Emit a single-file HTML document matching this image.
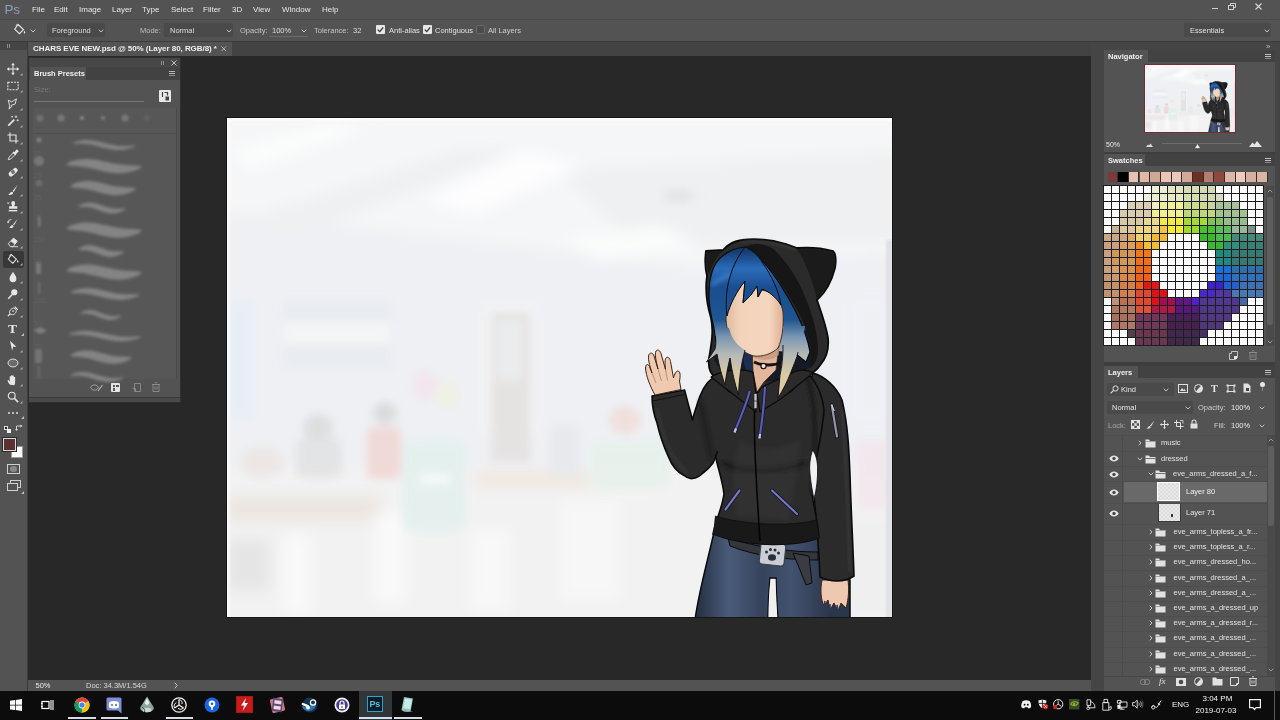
<!DOCTYPE html>
<html><head><meta charset="utf-8"><title>CHARS EVE NEW.psd</title>
<style>
html,body{margin:0;padding:0;background:#535353;}
#root{position:relative;width:1280px;height:720px;overflow:hidden;opacity:0.9999;font-family:"Liberation Sans",sans-serif;}
#root div{position:absolute;}
#root svg{position:absolute;overflow:visible;}
.t{position:absolute;white-space:nowrap;line-height:1;font-family:"Liberation Sans",sans-serif;}
</style></head><body><div id="root">
<div style="left:0px;top:0px;width:1280px;height:720px;background:#535353;"></div>
<div style="left:0px;top:0px;width:1280px;height:19px;background:#535353;"></div>
<div style="left:0px;top:19px;width:1280px;height:22px;background:#535353;border-top:1px solid #4a4a4a;box-sizing:border-box;"></div>
<div style="left:0px;top:41px;width:1280px;height:1px;background:#3a3a3a;"></div>
<div style="left:0px;top:42px;width:1280px;height:14px;background:#434343;"></div>
<div style="left:28px;top:42px;width:204px;height:14px;background:#535353;"></div>
<div style="left:28px;top:56px;width:1063px;height:624px;background:#282828;"></div>
<div style="left:0px;top:50px;width:27px;height:642px;background:#535353;"></div>
<div style="left:0px;top:42px;width:27px;height:8px;background:#454545;"></div>
<div style="left:27px;top:42px;width:1px;height:650px;background:#3c3c3c;"></div>
<div style="left:28px;top:680px;width:1063px;height:12px;background:#535353;"></div>
<div style="left:1091px;top:42px;width:189px;height:650px;background:#454545;"></div>
<span class="t" style="left:4.5px;top:2.5px;font-size:13.5px;color:#8d9ebf;letter-spacing:-0.300px;">Ps</span>
<span class="t" style="left:32px;top:5.5px;font-size:8px;color:#e6e6e6;">File</span>
<span class="t" style="left:54px;top:5.5px;font-size:8px;color:#e6e6e6;">Edit</span>
<span class="t" style="left:79px;top:5.5px;font-size:8px;color:#e6e6e6;">Image</span>
<span class="t" style="left:112px;top:5.5px;font-size:8px;color:#e6e6e6;">Layer</span>
<span class="t" style="left:142px;top:5.5px;font-size:8px;color:#e6e6e6;">Type</span>
<span class="t" style="left:171px;top:5.5px;font-size:8px;color:#e6e6e6;">Select</span>
<span class="t" style="left:203px;top:5.5px;font-size:8px;color:#e6e6e6;">Filter</span>
<span class="t" style="left:232px;top:5.5px;font-size:8px;color:#e6e6e6;">3D</span>
<span class="t" style="left:253px;top:5.5px;font-size:8px;color:#e6e6e6;">View</span>
<span class="t" style="left:282px;top:5.5px;font-size:8px;color:#e6e6e6;">Window</span>
<span class="t" style="left:322px;top:5.5px;font-size:8px;color:#e6e6e6;">Help</span>
<div style="left:1212px;top:8px;width:6px;height:1px;background:#cfcfcf;"></div>
<svg style="left:1228px;top:3px" width="10" height="9" viewBox="0 0 10 9"><rect x="0.5" y="2.5" width="5" height="4" fill="none" stroke="#cfcfcf"/><path d="M2.5 2.5v-2h5v4h-2" fill="none" stroke="#cfcfcf"/></svg>
<svg style="left:1255px;top:3px" width="8" height="8" viewBox="0 0 8 8"><path d="M0.5 0.5l6 6M6.5 0.5l-6 6" stroke="#d8d8d8" stroke-width="1.1"/></svg>
<svg style="left:13px;top:23px" width="14" height="13" viewBox="0 0 14 13"><path d="M5 1.5l5.5 5-4 4.2-4.8-4.6z" fill="none" stroke="#e4e4e4" stroke-width="1.1"/><path d="M3.5 3.5c-1-2.5 2-3 2.5-0.8" fill="none" stroke="#e4e4e4" stroke-width="0.9"/><path d="M11.3 7.6c0.9 1.4 1.4 2.2 0.6 2.8-0.9 0.5-1.6-0.6-0.6-2.8z" fill="#e4e4e4"/></svg>
<svg style="left:30px;top:29px" width="6" height="4" viewBox="0 0 6 4"><path d="M0.7 0.7l2.3 2.3 2.3-2.3" fill="none" stroke="#cfcfcf" stroke-width="0.9"/></svg>
<div style="left:47px;top:23px;width:58px;height:14px;background:#4a4a4a;border-radius:1px;"></div>
<span class="t" style="left:52px;top:26.7px;font-size:7.5px;color:#dedede;">Foreground</span>
<svg style="left:98px;top:29px" width="6" height="4" viewBox="0 0 6 4"><path d="M0.7 0.7l2.3 2.3 2.3-2.3" fill="none" stroke="#cfcfcf" stroke-width="0.9"/></svg>
<span class="t" style="left:140px;top:26.7px;font-size:7.5px;color:#bcbcbc;">Mode:</span>
<div style="left:164px;top:23px;width:69px;height:14px;background:#4a4a4a;border-radius:1px;"></div>
<span class="t" style="left:170px;top:26.7px;font-size:7.5px;color:#dedede;">Normal</span>
<svg style="left:226px;top:29px" width="6" height="4" viewBox="0 0 6 4"><path d="M0.7 0.7l2.3 2.3 2.3-2.3" fill="none" stroke="#cfcfcf" stroke-width="0.9"/></svg>
<span class="t" style="left:240px;top:26.7px;font-size:7.5px;color:#c4c4c4;">Opacity:</span>
<span class="t" style="left:272px;top:26.7px;font-size:7.5px;color:#dedede;">100%</span>
<div style="left:269px;top:36px;width:39px;height:1px;background:#6a6a6a;"></div>
<svg style="left:301px;top:29px" width="6" height="4" viewBox="0 0 6 4"><path d="M0.7 0.7l2.3 2.3 2.3-2.3" fill="none" stroke="#cfcfcf" stroke-width="0.9"/></svg>
<span class="t" style="left:314px;top:26.7px;font-size:7.5px;color:#c4c4c4;">Tolerance:</span>
<span class="t" style="left:353px;top:26.7px;font-size:7.5px;color:#dedede;">32</span>
<svg style="left:376px;top:25px" width="9" height="9" viewBox="0 0 9 9"><rect x="0" y="0" width="9" height="9" rx="1" fill="#e6e6e6"/><path d="M1.8 4.6l2 2 3.4-4.2" fill="none" stroke="#333" stroke-width="1.3"/></svg>
<span class="t" style="left:389px;top:26.7px;font-size:7.5px;color:#e0e0e0;">Anti-alias</span>
<svg style="left:423px;top:25px" width="9" height="9" viewBox="0 0 9 9"><rect x="0" y="0" width="9" height="9" rx="1" fill="#e6e6e6"/><path d="M1.8 4.6l2 2 3.4-4.2" fill="none" stroke="#333" stroke-width="1.3"/></svg>
<span class="t" style="left:435px;top:26.7px;font-size:7.5px;color:#e0e0e0;">Contiguous</span>
<svg style="left:476px;top:25px" width="9" height="9" viewBox="0 0 9 9"><rect x="0.5" y="0.5" width="8" height="8" rx="1" fill="#4b4b4b" stroke="#6a6a6a"/></svg>
<span class="t" style="left:488px;top:26.7px;font-size:7.5px;color:#cfcfcf;">All Layers</span>
<div style="left:1184px;top:23px;width:87px;height:14px;background:#4a4a4a;border-radius:1px;"></div>
<span class="t" style="left:1190px;top:26.7px;font-size:7.5px;color:#e0e0e0;">Essentials</span>
<svg style="left:1264px;top:29px" width="6" height="4" viewBox="0 0 6 4"><path d="M0.7 0.7l2.3 2.3 2.3-2.3" fill="none" stroke="#cfcfcf" stroke-width="0.9"/></svg>
<span class="t" style="left:33px;top:45px;font-size:8px;color:#f0f0f0;font-weight:bold;letter-spacing:-0.05px;">CHARS EVE NEW.psd @ 50% (Layer 80, RGB/8) *</span>
<svg style="left:221px;top:46px" width="6" height="6" viewBox="0 0 6 6"><path d="M0.5 0.5l4.5 4.5M5 0.5l-4.5 4.5" stroke="#bdbdbd" stroke-width="0.9"/></svg>
<div style="left:7px;top:44px;width:1px;height:4px;background:#8a8a8a;"></div>
<div style="left:9px;top:44px;width:1px;height:4px;background:#8a8a8a;"></div>
<div style="left:3px;top:251px;width:21px;height:17px;background:#383838;border-radius:2px;"></div>
<svg style="left:7px;top:63px" width="12" height="12" viewBox="0 0 14 14"><path d="M7 0.5v13M0.5 7h13" stroke="#e6e6e6" stroke-width="1.2"/><path d="M7 0l2.2 2.6h-4.4zM7 14l2.2-2.6h-4.4zM0 7l2.6-2.2v4.4zM14 7l-2.6-2.2v4.4z" fill="#e6e6e6"/></svg>
<svg style="left:20px;top:73px" width="2.500" height="2.500" viewBox="0 0 3 3"><path d="M3 0v3h-3z" fill="#b0b0b0"/></svg>
<svg style="left:7px;top:80px" width="12" height="12" viewBox="0 0 14 14"><rect x="1" y="2.5" width="12" height="9" fill="none" stroke="#e6e6e6" stroke-width="1.2" stroke-dasharray="2.4 1.2"/></svg>
<svg style="left:20px;top:90px" width="2.500" height="2.500" viewBox="0 0 3 3"><path d="M3 0v3h-3z" fill="#b0b0b0"/></svg>
<svg style="left:7px;top:97.5px" width="12" height="12" viewBox="0 0 14 14"><path d="M1.5 2.5l4 2 5.5-3.5-1.5 6-4.5 1.5 0 2-2.5 2.5 0.5-4z" fill="none" stroke="#e6e6e6" stroke-width="1.1" stroke-linejoin="round"/></svg>
<svg style="left:20px;top:107.5px" width="2.500" height="2.500" viewBox="0 0 3 3"><path d="M3 0v3h-3z" fill="#b0b0b0"/></svg>
<svg style="left:7px;top:115px" width="12" height="12" viewBox="0 0 14 14"><path d="M1.5 12.5l7-7" stroke="#e6e6e6" stroke-width="2"/><path d="M10.5 0.5v3M9 2h3M12.5 5v2.4M11.3 6.2h2.4M6 1v2M5 2h2" stroke="#e6e6e6" stroke-width="0.9"/></svg>
<svg style="left:20px;top:125px" width="2.500" height="2.500" viewBox="0 0 3 3"><path d="M3 0v3h-3z" fill="#b0b0b0"/></svg>
<svg style="left:7px;top:132px" width="12" height="12" viewBox="0 0 14 14"><path d="M3.5 0.5v10h10M0.5 3.5h10v10" fill="none" stroke="#e6e6e6" stroke-width="1.3"/></svg>
<svg style="left:20px;top:142px" width="2.500" height="2.500" viewBox="0 0 3 3"><path d="M3 0v3h-3z" fill="#b0b0b0"/></svg>
<svg style="left:7px;top:149px" width="12" height="12" viewBox="0 0 14 14"><path d="M1.5 12.5l1-3 5-5 2 2-5 5z" fill="none" stroke="#e6e6e6" stroke-width="1.1"/><path d="M7 3.5l3.5 3.5M8.5 5l3-3.5 1.2 1.2-3.2 3.3" stroke="#e6e6e6" stroke-width="1.6" fill="none"/></svg>
<svg style="left:20px;top:159px" width="2.500" height="2.500" viewBox="0 0 3 3"><path d="M3 0v3h-3z" fill="#b0b0b0"/></svg>
<svg style="left:7px;top:166px" width="12" height="12" viewBox="0 0 14 14"><rect x="1" y="4.5" width="12" height="5.5" rx="2.5" transform="rotate(-40 7 7)" fill="#e6e6e6"/><rect x="5.2" y="5.2" width="3.6" height="3.6" transform="rotate(-40 7 7)" fill="#535353"/><circle cx="7" cy="7" r="0.7" fill="#e6e6e6"/></svg>
<svg style="left:20px;top:176px" width="2.500" height="2.500" viewBox="0 0 3 3"><path d="M3 0v3h-3z" fill="#b0b0b0"/></svg>
<svg style="left:7px;top:184px" width="12" height="12" viewBox="0 0 14 14"><path d="M12.5 1l-6 7.2 1.4 1.2z" fill="#e6e6e6"/><path d="M6 9c-2 0-2.5 2-4.5 3.5 2.5 0.6 5.2 0 5.8-2.3z" fill="#e6e6e6"/></svg>
<svg style="left:20px;top:194px" width="2.500" height="2.500" viewBox="0 0 3 3"><path d="M3 0v3h-3z" fill="#b0b0b0"/></svg>
<svg style="left:7px;top:201px" width="12" height="12" viewBox="0 0 14 14"><path d="M5 2.2a2.2 2.2 0 1 1 4.400 0c0 1.6-0.900 2.300-0.900 3.800h3.500v3h-9.600v-3h3.500c0-1.500-0.900-2.200-0.900-3.800z" fill="#e6e6e6"/><rect x="2" y="10.5" width="10" height="1.6" fill="#e6e6e6"/><path d="M0.500 1.500l2 2M2.500 1.500l-2 2" stroke="#e6e6e6" stroke-width="0.8"/></svg>
<svg style="left:20px;top:211px" width="2.500" height="2.500" viewBox="0 0 3 3"><path d="M3 0v3h-3z" fill="#b0b0b0"/></svg>
<svg style="left:7px;top:218px" width="12" height="12" viewBox="0 0 14 14"><path d="M12.500 1l-5.500 6.500 1.300 1.100z" fill="#e6e6e6"/><path d="M6.500 8.300c-1.800 0-2.200 1.800-4 3.200 2.300 0.500 4.700 0 5.200-2z" fill="#e6e6e6"/><path d="M1 5.500a4 4 0 0 1 4-3.800" fill="none" stroke="#e6e6e6" stroke-width="1"/><path d="M0 4l1.200 2.200 1.800-1.700z" fill="#e6e6e6"/></svg>
<svg style="left:20px;top:228px" width="2.500" height="2.500" viewBox="0 0 3 3"><path d="M3 0v3h-3z" fill="#b0b0b0"/></svg>
<svg style="left:7px;top:236px" width="12" height="12" viewBox="0 0 14 14"><path d="M1.500 9l6-6.500 4.500 3.500-5 6.500h-3z" fill="none" stroke="#e6e6e6" stroke-width="1.100" stroke-linejoin="round"/><path d="M4.400 6l4.600 3.700 3-3.900-4.500-3.500z" fill="#e6e6e6"/><path d="M6 12.500h7" stroke="#e6e6e6" stroke-width="1"/></svg>
<svg style="left:20px;top:246px" width="2.500" height="2.500" viewBox="0 0 3 3"><path d="M3 0v3h-3z" fill="#b0b0b0"/></svg>
<svg style="left:7px;top:253px" width="12" height="12" viewBox="0 0 14 14"><path d="M5 2l6 5.200-4.300 4.800-5.200-5z" fill="none" stroke="#e6e6e6" stroke-width="1.200" stroke-linejoin="round"/><path d="M3.600 4.200c-1.200-2.800 2.200-3.600 2.700-1" fill="none" stroke="#e6e6e6" stroke-width="1"/><path d="M12.300 8c1 1.600 1.500 2.500 0.600 3.100-1 0.600-1.800-0.700-0.600-3.100z" fill="#e6e6e6"/></svg>
<svg style="left:20px;top:263px" width="2.500" height="2.500" viewBox="0 0 3 3"><path d="M3 0v3h-3z" fill="#b0b0b0"/></svg>
<svg style="left:7px;top:270.5px" width="12" height="12" viewBox="0 0 14 14"><path d="M7 1c1.500 3 4 5 4 8a4 4 0 0 1-8 0c0-3 2.500-5 4-8z" fill="#e6e6e6"/></svg>
<svg style="left:20px;top:280.5px" width="2.500" height="2.500" viewBox="0 0 3 3"><path d="M3 0v3h-3z" fill="#b0b0b0"/></svg>
<svg style="left:7px;top:288px" width="12" height="12" viewBox="0 0 14 14"><circle cx="8.500" cy="5" r="3.600" fill="#e6e6e6"/><path d="M6 7.600l-4.500 5" stroke="#e6e6e6" stroke-width="1.800"/></svg>
<svg style="left:20px;top:298px" width="2.500" height="2.500" viewBox="0 0 3 3"><path d="M3 0v3h-3z" fill="#b0b0b0"/></svg>
<svg style="left:7px;top:305px" width="12" height="12" viewBox="0 0 14 14"><path d="M3.500 10.500c-1.500-3.500 0.500-6 4.500-7l3 3c-1 4-3.500 6-7.500 4z" fill="none" stroke="#e6e6e6" stroke-width="1.100"/><circle cx="7" cy="7" r="1" fill="#e6e6e6"/><path d="M9 2l3.500 3.500M1 13l2.500-2.500" stroke="#e6e6e6" stroke-width="1.400"/></svg>
<svg style="left:20px;top:315px" width="2.500" height="2.500" viewBox="0 0 3 3"><path d="M3 0v3h-3z" fill="#b0b0b0"/></svg>
<svg style="left:7px;top:339.5px" width="12" height="12" viewBox="0 0 14 14"><path d="M3.500 1l7.500 7h-3.800l-1.200 4.500z" fill="#e6e6e6"/></svg>
<svg style="left:20px;top:349.5px" width="2.500" height="2.500" viewBox="0 0 3 3"><path d="M3 0v3h-3z" fill="#b0b0b0"/></svg>
<svg style="left:7px;top:356.5px" width="12" height="12" viewBox="0 0 14 14"><ellipse cx="7" cy="7" rx="5.800" ry="4.600" fill="#6b6b6b" stroke="#e6e6e6" stroke-width="1.100"/></svg>
<svg style="left:20px;top:366.5px" width="2.500" height="2.500" viewBox="0 0 3 3"><path d="M3 0v3h-3z" fill="#b0b0b0"/></svg>
<svg style="left:7px;top:374px" width="12" height="12" viewBox="0 0 14 14"><path d="M3.500 12.500c-1.500-1.500-2.500-3.300-3-5l1.300-0.500 1.400 2v-6.500h1.600v4.500v-5.500h1.600v5.500v-5h1.600v5.300v-3.800h1.500v6c0 2-0.600 2.500-1.200 3.500z" fill="#e6e6e6"/></svg>
<svg style="left:20px;top:384px" width="2.500" height="2.500" viewBox="0 0 3 3"><path d="M3 0v3h-3z" fill="#b0b0b0"/></svg>
<svg style="left:7px;top:391px" width="12" height="12" viewBox="0 0 14 14"><circle cx="5.500" cy="5.500" r="4" fill="none" stroke="#e6e6e6" stroke-width="1.300"/><path d="M8.500 8.500l4.500 4.500" stroke="#e6e6e6" stroke-width="1.800"/></svg>
<svg style="left:20px;top:401px" width="2.500" height="2.500" viewBox="0 0 3 3"><path d="M3 0v3h-3z" fill="#b0b0b0"/></svg>
<span class="t" style="left:8px;top:321.5px;font-size:13.5px;color:#e6e6e6;font-family:'Liberation Serif',serif;font-weight:bold;">T</span>
<svg style="left:21px;top:333px" width="3" height="3" viewBox="0 0 3 3"><path d="M3 0v3h-3z" fill="#bdbdbd"/></svg>
<div style="left:8px;top:412px;width:2px;height:2px;background:#dcdcdc;border-radius:1px;"></div>
<div style="left:12px;top:412px;width:2px;height:2px;background:#dcdcdc;border-radius:1px;"></div>
<div style="left:16px;top:412px;width:2px;height:2px;background:#dcdcdc;border-radius:1px;"></div>
<svg style="left:21px;top:416px" width="3" height="3" viewBox="0 0 3 3"><path d="M3 0v3h-3z" fill="#bdbdbd"/></svg>
<div style="left:4px;top:426px;width:4px;height:4px;background:#222;border:1px solid #ddd;box-sizing:border-box;"></div>
<div style="left:7px;top:429px;width:4px;height:4px;background:#eee;"></div>
<svg style="left:15px;top:424px" width="8" height="8" viewBox="0 0 8 8"><path d="M1.500 5.500v-3.500h4.500" fill="none" stroke="#ddd" stroke-width="0.900"/><path d="M0 5l1.500 2 1.500-2zM5.500 0.500l2 1.500-2 1.500z" fill="#ddd"/></svg>
<div style="left:11px;top:446px;width:12px;height:12px;background:#ffffff;border:1px solid #9a9a9a;box-sizing:border-box;"></div>
<div style="left:3px;top:438px;width:13px;height:13px;background:#5a3234;border:1px solid #d8d8d8;box-sizing:border-box;box-shadow:0 0 0 1px #2c2c2c;"></div>
<div style="left:7px;top:464px;width:13px;height:10px;background:transparent;border:1px solid #d0d0d0;box-sizing:border-box;"></div>
<div style="left:10px;top:466px;width:7px;height:6px;background:#8a8a8a;border-radius:3px;"></div>
<div style="left:10px;top:480px;width:11px;height:8px;background:transparent;border:1px solid #d0d0d0;box-sizing:border-box;"></div>
<div style="left:7px;top:483px;width:11px;height:8px;background:#535353;border:1px solid #d0d0d0;box-sizing:border-box;"></div>
<svg style="left:21px;top:491px" width="3" height="3" viewBox="0 0 3 3"><path d="M3 0v3h-3z" fill="#bdbdbd"/></svg>
<div style="left:226px;top:117px;width:667px;height:501px;background:#161616;"></div>
<svg style="left:0;top:0" width="1280" height="720" viewBox="0 0 1280 720">
<defs>
<clipPath id="imgclip"><rect x="227" y="118" width="665" height="499"/></clipPath>
<filter id="bl8" x="-30%" y="-30%" width="160%" height="160%"><feGaussianBlur stdDeviation="7"/></filter>
<filter id="bl4" x="-30%" y="-30%" width="160%" height="160%"><feGaussianBlur stdDeviation="4"/></filter>
<filter id="bl2" x="-30%" y="-30%" width="160%" height="160%"><feGaussianBlur stdDeviation="2"/></filter>
<filter id="bl1" x="-30%" y="-30%" width="160%" height="160%"><feGaussianBlur stdDeviation="1"/></filter>
<linearGradient id="hairg" gradientUnits="userSpaceOnUse" x1="0" y1="250" x2="0" y2="395">
<stop offset="0" stop-color="#143a70"/><stop offset="0.130" stop-color="#2a6cba"/><stop offset="0.260" stop-color="#1a4e90"/><stop offset="0.480" stop-color="#1f5590"/><stop offset="0.600" stop-color="#7c97b2"/><stop offset="0.720" stop-color="#b4b9b6"/><stop offset="0.850" stop-color="#d8c8a4"/><stop offset="1" stop-color="#e0cea6"/></linearGradient>
<linearGradient id="sking" gradientUnits="userSpaceOnUse" x1="726" y1="0" x2="784" y2="0">
<stop offset="0" stop-color="#e2b99e"/><stop offset="0.250" stop-color="#f3d3bb"/><stop offset="0.750" stop-color="#f4d5be"/><stop offset="1" stop-color="#dcae93"/></linearGradient>
<linearGradient id="jeang" gradientUnits="userSpaceOnUse" x1="700" y1="0" x2="830" y2="0">
<stop offset="0" stop-color="#2a3448"/><stop offset="0.220" stop-color="#4a5b7a"/><stop offset="0.480" stop-color="#36435c"/><stop offset="0.700" stop-color="#42526f"/><stop offset="1" stop-color="#2c364b"/></linearGradient>
</defs><g id="artwork"><g clip-path="url(#imgclip)"><rect x="227" y="118" width="665" height="499" fill="#f5f6f7"/><g filter="url(#bl8)"><path d="M200 208L700 268L920 250L920 470L200 470z" fill="#eef0f4"/><path d="M227 225L460 150L520 150L300 235z" fill="#eff0f2"/><path d="M560 170L920 150L920 240L640 250z" fill="#eff0f2"/><path d="M425 200L520 150L585 165L475 215z" fill="#fdfdfe"/><path d="M230 150L330 122L370 128L250 170z" fill="#fbfcfc"/><path d="M560 240L660 225L700 245L600 262z" fill="#fafbfb"/><rect x="200" y="465" width="720" height="170" fill="#f2f2f2"/><rect x="227" y="497" width="153" height="24" fill="#ebe5df"/><rect x="478" y="472" width="112" height="14" fill="#eee6da"/><rect x="227" y="540" width="42" height="50" fill="#e5e5e5"/><rect x="284" y="535" width="26" height="80" fill="#f9f9f9"/><rect x="374" y="512" width="32" height="90" fill="#f9f9f9"/><rect x="470" y="530" width="40" height="80" fill="#f8f8f8"/><rect x="560" y="500" width="60" height="100" fill="#f7f7f7"/></g><g filter="url(#bl4)" opacity="0.850"><rect x="486" y="306" width="50" height="128" fill="#f6f6f7"/><rect x="491" y="312" width="40" height="150" fill="#e4e1df"/><rect x="497" y="320" width="26" height="60" fill="#ebecee"/><rect x="282" y="300" width="110" height="70" fill="#e9ecf0"/><rect x="284" y="322" width="106" height="22" fill="#f5f6f7"/><rect x="227" y="300" width="26" height="120" fill="#e8eef8"/><ellipse cx="385" cy="413" rx="12" ry="11" fill="#d8d8d8"/><rect x="367" y="427" width="34" height="52" rx="8" fill="#f1d5d2"/><ellipse cx="318" cy="428" rx="15" ry="14" fill="#dcdcdc"/><rect x="296" y="438" width="46" height="40" rx="8" fill="#e2e2e3"/><ellipse cx="262" cy="462" rx="22" ry="16" fill="#ece6e3"/><rect x="402" y="440" width="64" height="92" rx="12" fill="#e3f0ee"/><rect x="420" y="474" width="30" height="10" fill="#f6fbfa"/><ellipse cx="425" cy="385" rx="12" ry="14" fill="#f4e3ec"/><ellipse cx="447" cy="395" rx="9" ry="14" fill="#eff2de"/><ellipse cx="625" cy="420" rx="16" ry="14" fill="#f1ddd9"/><rect x="590" y="440" width="80" height="50" rx="10" fill="#e7f1eb"/><rect x="550" y="425" width="30" height="50" rx="6" fill="#e6e8ec"/><rect x="852" y="300" width="40" height="120" fill="#eef1f5"/><rect x="856" y="440" width="36" height="70" fill="#f2e7ee"/><rect x="850" y="520" width="42" height="97" fill="#f0efef"/></g><ellipse cx="679" cy="196" rx="16" ry="8" fill="#e3e6e9" filter="url(#bl4)"/><rect x="886" y="240" width="8" height="380" fill="#dfe1e4" filter="url(#bl1)"/><path d="M228 620V119H893" stroke="#ffffff" stroke-width="2.500" fill="none" filter="url(#bl1)"/><path d="M714 532C708 560 699 590 695 620L768 620C768 605 769 590 770 578L776 578C776 592 777 606 778 620L850 620L850 580L822 572L818 536z" fill="url(#jeang)" stroke="#0b0b0b" stroke-width="1.500"/><path d="M768.500 620C768.500 605 769 592 770.500 579L775.500 579C776 592 776.500 606 777.500 620z" fill="#f1f0f0"/><path d="M728 538C760 548 790 552 818 552L818 560C790 560 758 557 730 546z" fill="#34363c" stroke="#0b0b0b" stroke-width="1"/><path d="M793 553L809 556L812 583L806 585L800 570z" fill="#3a3c43" stroke="#0b0b0b" stroke-width="1"/><rect x="760" y="543" width="25" height="22" rx="3" transform="rotate(6 772 554)" fill="#c9ced6" stroke="#3c4047" stroke-width="1.200"/><ellipse cx="772" cy="557.500" rx="4" ry="3.200" fill="#2c3038"/><circle cx="766.500" cy="552" r="1.500" fill="#2c3038"/><circle cx="770.500" cy="549.500" r="1.500" fill="#2c3038"/><circle cx="775" cy="550" r="1.500" fill="#2c3038"/><circle cx="778.500" cy="553" r="1.500" fill="#2c3038"/><path d="M822 580C820 590 821 600 824 606L828 600L830 610L834 603L838 611L841 603L846 608C849 598 849 588 848 580z" fill="#eec9b0" stroke="#3a2418" stroke-width="1"/><path d="M824 606l1-5M830 610l0-6M838 611l-1-6" stroke="#2c3a5c" stroke-width="1.600"/><path d="M813 373C824 376 836 386 842 400C848 425 849 450 850 475C851 510 853 545 854 576C844 583 830 582 820 577C819 548 816 520 814 495C806 470 800 440 800 410z" fill="#2b2b2b" stroke="#0b0b0b" stroke-width="1.600"/><path d="M842 410C846 450 848 520 850 572" stroke="#3d3d3d" stroke-width="3" fill="none" opacity="0.600" filter="url(#bl1)"/><path d="M722 380C712 395 708 415 711 434C713 455 722 475 724 494C722 508 716 520 713 534C745 546 790 548 819 538C818 522 814 508 812 494C812 470 822 440 824 410C822 392 815 380 806 372L770 372L752 374z" fill="#2b2b2b" stroke="#0b0b0b" stroke-width="1.600"/><path d="M715 516C745 525 790 527 816 520L819 538C790 548 745 546 713 534z" fill="#191919"/><path d="M715 516C745 525 790 527 816 520" stroke="#0c0c0c" stroke-width="1" fill="none" opacity="0.700"/><path d="M722 462C740 474 780 474 806 462" stroke="#141414" stroke-width="5" fill="none" opacity="0.700" filter="url(#bl2)"/><path d="M740 440C752 452 778 452 800 440C800 470 790 500 790 520L736 516C734 490 730 465 740 440z" fill="#3d3d3d" opacity="0.350" filter="url(#bl2)"/><path d="M806 376C815 395 818 440 812 494" stroke="#1b1b1b" stroke-width="5" fill="none" opacity="0.800" filter="url(#bl1)"/><path d="M812.500 450C810 458 809 466 810 474C811 484 812.500 492 814 499C816.500 490 818 478 817.500 466C817 458 815 453 812.500 450z" fill="#eef0f3" stroke="#0b0b0b" stroke-width="0.800"/><path d="M755 392C753 430 756 480 760 541" stroke="#050505" stroke-width="1.600" fill="none"/><path d="M718 375C710 378 704 386 700 396C697 405 694 413 692.500 420C690 410 687 400 684.600 390L652 396C652 406 654 415 657 423C660 436 664 447 668.500 457C672 466 677 472 684 475.500C687 478 690 479 692.500 478.500C697 478 700 476 703 473C707 470 710 467 713 463C716 455 720 445 720 435C722 420 724 400 728 385z" fill="#2b2b2b"/><path d="M718 375C710 378 704 386 700 396C697 405 694 413 692.500 420C690 410 687 400 684.600 390L652 396C652 406 654 415 657 423C660 436 664 447 668.500 457C672 466 677 472 684 475.500C687 478 690 479 692.500 478.500C697 478 700 476 703 473C707 470 710 467 713 463C715 459 716.500 455 717.500 451" fill="none" stroke="#0b0b0b" stroke-width="1.600" stroke-linejoin="round"/><path d="M657 408C662 435 670 458 688 474" stroke="#3d3d3d" stroke-width="4" fill="none" opacity="0.450" filter="url(#bl1)"/><path d="M652.500 401L684.500 394.500" stroke="#0b0b0b" stroke-width="0.800" fill="none"/><path d="M700 400C704 420 708 440 712 460" stroke="#151515" stroke-width="4" fill="none" opacity="0.600" filter="url(#bl2)"/><path d="M655 395C650 386 646 376 645.500 368C645.500 364 648 363.500 649.500 366.500L652 373C649.500 365 647.500 358 649 354.500C650.500 352 653 353 654 356L658 369C656 361 654.500 354 656 351C658 349 660 350.500 661 353.500L665.500 369.500C665 364 664.500 359 666.500 357.500C668.500 356.500 670 358.500 670.500 361.500L673.500 378C674.500 374 676 371 678 371C680.500 371.500 680.500 376 679.500 381L681 389.500z" fill="#efc9b0" stroke="#3a2418" stroke-width="1" stroke-linejoin="round"/><path d="M652 373l4 10M658 369l3.500 12M665.500 369.500l2 11" stroke="#a9705a" stroke-width="0.700" fill="none"/><path d="M706 251L723 250C728 244 734 241 742 240C755 238 772 240 786 244L797 248C808 247 822 248 833 251C836 254 836 262 835 268C832 280 826 292 817 300C821 312 826 325 828 338C829 348 826 358 821 364C817 370 812 374 806 376L790 392L730 392L716 378C710 374 708 366 709 358C711 346 714 332 711 318C707 305 705 290 707 276C705 268 705 258 706 251z" fill="#2b2b2b" stroke="#0b0b0b" stroke-width="1.800" stroke-linejoin="round"/><path d="M797 249C806 262 812 280 817 299C826 290 832 278 834 266C835 258 835 254 832 252C822 249 808 248 797 249z" fill="#1b1b1b"/><path d="M706 252C706 260 706 268 709 274C712 264 717 256 723 251z" fill="#1b1b1b"/><path d="M742 242C760 240 780 244 796 250" stroke="#3d3d3d" stroke-width="2.500" fill="none" opacity="0.600" filter="url(#bl1)"/><path d="M716 330L812 330L812 366L790 380L730 384L714 360z" fill="#141a26"/><path d="M712 272C716 258 728 249 745 247C752 249 758 254 762 260C774 274 786 292 796 312C803 326 808 340 810 352L806 362L796 354L783 352L745 350L716 350C716 340 715 334 714 328C710 312 706 292 712 272z" fill="url(#hairg)" stroke="#0b0b0b" stroke-width="1.200" stroke-linejoin="round"/><path d="M744 348C742 358 744 370 752 378L752 348z" fill="#1b2f52"/><path d="M712 285C722 275 742 271 758 275" stroke="#4a90e0" stroke-width="4" fill="none" opacity="0.600" filter="url(#bl2)"/><path d="M745 247C752 243 762 243 772 248C788 262 800 282 808 304C814 320 818 336 818 350C818 358 815 364 810 368L812 352C810 338 804 322 796 308C786 290 774 272 762 260C758 254 752 249 745 247z" fill="#161616"/><path d="M752 345L753 372L757 392L764 382L776 370L779 345z" fill="#e3b79c" stroke="#3a2418" stroke-width="0.800"/><path d="M753 357C760 361 772 361 779 355L779 348L753 348z" fill="#c4957b" opacity="0.750"/><path d="M745 280C738 290 728 304 726 317C726 326 728 334 732 340C738 348 746 354 754 356C762 357 772 354 778 348C782 340 784 326 783 312C782 304 776 296 770 292L762 290L758 297L757 286L750 296L743 303z" fill="url(#sking)" stroke="#3a2418" stroke-width="0.900" stroke-linejoin="round"/><path d="M745 247C738 256 730 270 727 290C726 300 726 310 727 316C730 304 737 291 745 281L743 303L751 295L757 286L758 297L762 289C768 291 776 297 781 305C779 292 772 276 762 262C758 255 752 250 745 247z" fill="url(#hairg)" stroke="#0b0b0b" stroke-width="1" stroke-linejoin="round"/><path d="M754 362C762 366 774 366 783 362" stroke="#1a1212" stroke-width="3" fill="none"/><circle cx="763.500" cy="366" r="2.600" fill="#f0e6e6" stroke="#1a1212" stroke-width="1.200"/><path d="M711 377C722 370 740 368 753 372L756 394L756 412L738 398z" fill="#2b2b2b" stroke="#0b0b0b" stroke-width="1.200" stroke-linejoin="round"/><path d="M813 373C806 368 796 370 790 374L762 387L757 394L760 412L782 398z" fill="#2b2b2b" stroke="#0b0b0b" stroke-width="1.200" stroke-linejoin="round"/><path d="M716 328C716 338 716 344 715 349L706.500 362L717 354C719 366 722 376 725 385C726 376 728 366 730 358C732 372 735 384 738.500 395C739 380 741 364 745 350C738 346 732 340 729 328z" fill="url(#hairg)"/><path d="M715.500 336C716 342 716 345 715 349L706.500 362L717 354C719 366 722 376 725 385C726 376 728 366 730 358C732 372 735 384 738.500 395C739 380 741 364 745 350" fill="none" stroke="#0b0b0b" stroke-width="0.900" stroke-linejoin="round"/><path d="M783 326C783 345 783 360 780 375L778 398C783 390 788 380 791 372C794 364 797 358 798 352C801 348 803 340 805 326z" fill="url(#hairg)"/><path d="M783 345C783 358 782 366 780 375L778 398C783 390 788 380 791 372C794 364 797 358 798 352" fill="none" stroke="#0b0b0b" stroke-width="0.900" stroke-linejoin="round"/><rect x="754" y="393.500" width="3" height="15" fill="#c4c8ce" stroke="#222" stroke-width="0.700"/><path d="M754 401h3" stroke="#333" stroke-width="0.800"/><path d="M749.700 391C746 405 740 419 734.500 432" stroke="#14142a" stroke-width="3.400" fill="none"/><path d="M749.700 391C746 405 740 419 734.500 432" stroke="#5a5cb6" stroke-width="2.200" fill="none"/><path d="M736 428.500L734.500 432.500" stroke="#c6c6e6" stroke-width="2.200"/><path d="M765 387C764 405 762 422 759.500 438" stroke="#14142a" stroke-width="3.400" fill="none"/><path d="M765 387C764 405 762 422 759.500 438" stroke="#5a5cb6" stroke-width="2.200" fill="none"/><path d="M760 434L759.500 438.500" stroke="#c6c6e6" stroke-width="2.200"/><path d="M739.500 490.500L725.500 509.500M772 490.500L797 514" stroke="#0c0c18" stroke-width="3.600" stroke-linecap="round"/><path d="M739.500 490.500L725.500 509.500M772 490.500L797 514" stroke="#7478c6" stroke-width="2.200" stroke-linecap="round"/><path d="M831.700 405L837 436.500" stroke="#0c0c10" stroke-width="3.600" stroke-linecap="round"/><path d="M831.700 405L837 436.500" stroke="#9298aa" stroke-width="2.200" stroke-linecap="round"/><path d="M831.700 405l2.500 6" stroke="#d0d4dc" stroke-width="1.200"/></g></g></svg>
<div style="left:28px;top:57px;width:153px;height:346px;background:#2f2f2f;"></div>
<div style="left:29px;top:58px;width:151px;height:9px;background:#474747;"></div>
<div style="left:161px;top:61px;width:1px;height:4px;background:#8c8c8c;"></div>
<div style="left:163px;top:61px;width:1px;height:4px;background:#8c8c8c;"></div>
<svg style="left:171px;top:60px" width="6" height="6" viewBox="0 0 6 6"><path d="M0.500 0.500l5 5M5.500 0.500l-5 5" stroke="#cfcfcf" stroke-width="0.900"/></svg>
<div style="left:29px;top:67px;width:151px;height:13px;background:#424242;"></div>
<div style="left:30px;top:67px;width:56px;height:13px;background:#535353;"></div>
<span class="t" style="left:34px;top:70px;font-size:7.5px;color:#f0f0f0;font-weight:bold;">Brush Presets</span>
<div style="left:169px;top:71px;width:6px;height:1px;background:#b5b5b5;"></div>
<div style="left:169px;top:73px;width:6px;height:1px;background:#b5b5b5;"></div>
<div style="left:169px;top:75px;width:6px;height:1px;background:#8a8a8a;"></div>
<div style="left:29px;top:80px;width:151px;height:318px;background:#535353;"></div>
<span class="t" style="left:34px;top:86px;font-size:7.5px;color:#777;">Size:</span>
<div style="left:34px;top:101px;width:110px;height:1px;background:#787878;"></div>
<div style="left:159px;top:90px;width:12px;height:12px;background:#e8e8e8;border-radius:1px;"></div>
<svg style="left:159px;top:90px" width="12" height="12" viewBox="0 0 12 12"><path d="M3.500 2v5M5.500 2.500h3v3" stroke="#444" stroke-width="1.200" fill="none"/><path d="M6.500 6.500h3.500v4h-3.500z" fill="#444"/></svg>
<div style="left:33px;top:108px;width:143px;height:271px;background:#575757;"></div>
<div style="left:33px;top:133px;width:143px;height:1px;background:#4e4e4e;"></div>
<div style="left:176px;top:108px;width:1px;height:271px;background:#4a4a4a;"></div>
<div style="left:29px;top:397px;width:151px;height:1px;background:#3a3a3a;"></div>
<div style="left:29px;top:398px;width:151px;height:4px;background:#4a4a4a;"></div>
<svg style="left:0;top:0" width="200" height="410" viewBox="0 0 200 410"><defs><filter id="bb" x="-20%" y="-50%" width="140%" height="200%"><feGaussianBlur stdDeviation="1.600"/></filter><filter id="bb2" x="-50%" y="-50%" width="200%" height="200%"><feGaussianBlur stdDeviation="1.100"/></filter></defs><g filter="url(#bb)" fill="none" stroke-linecap="round"><path d="M72.0 143.5L74.7 142.1L77.3 141.3L80.0 140.7L82.7 140.3L85.3 140.1L88.0 140.0L90.7 140.2L93.3 140.5L96.0 140.9L98.7 141.5L101.3 142.2L104.0 142.9L106.7 143.6L109.3 144.2L112.0 144.8L114.7 145.3L117.3 145.7L120.0 145.9L122.7 146.0L125.3 146.0L128.0 145.9L130.7 145.7L133.3 145.5L136.0 145.8L136.0 145.8L133.3 147.2L130.7 148.1L128.0 148.8L125.3 149.4L122.7 149.8L120.0 150.0L117.3 150.1L114.7 149.9L112.0 149.6L109.3 149.1L106.7 148.5L104.0 147.9L101.3 147.2L98.7 146.4L96.0 145.7L93.3 145.1L90.7 144.6L88.0 144.2L85.3 143.9L82.7 143.7L80.0 143.7L77.3 143.7L74.7 143.8L72.0 143.5z" fill="#8c8c8c" stroke="none" opacity="0.850"/><path d="M66.0 164.5L69.2 162.3L72.3 161.1L75.5 160.2L78.7 159.6L81.8 159.2L85.0 159.0L88.2 159.0L91.3 159.2L94.5 159.6L97.7 160.1L100.8 160.7L104.0 161.4L107.2 162.1L110.3 162.8L113.5 163.4L116.7 164.0L119.8 164.5L123.0 164.8L126.2 165.1L129.3 165.3L132.5 165.4L135.7 165.5L138.8 165.7L142.0 166.8L142.0 166.8L138.8 169.0L135.7 170.3L132.5 171.3L129.3 172.1L126.2 172.7L123.0 173.1L119.8 173.3L116.7 173.2L113.5 173.0L110.3 172.6L107.2 172.0L104.0 171.4L100.8 170.6L97.7 169.9L94.5 169.1L91.3 168.4L88.2 167.8L85.0 167.2L81.8 166.8L78.7 166.4L75.5 166.1L72.3 165.9L69.2 165.6L66.0 164.5z" fill="#8c8c8c" stroke="none" opacity="0.850"/><path d="M70.0 186.5L72.8 184.3L75.5 183.1L78.2 182.2L81.0 181.6L83.8 181.2L86.5 181.0L89.2 181.0L92.0 181.2L94.8 181.6L97.5 182.1L100.2 182.7L103.0 183.4L105.8 184.1L108.5 184.8L111.2 185.4L114.0 186.0L116.8 186.5L119.5 186.8L122.2 187.1L125.0 187.3L127.8 187.4L130.5 187.5L133.2 187.7L136.0 188.8L136.0 188.8L133.2 191.0L130.5 192.3L127.8 193.3L125.0 194.1L122.2 194.7L119.5 195.1L116.8 195.3L114.0 195.2L111.2 195.0L108.5 194.6L105.8 194.0L103.0 193.4L100.2 192.6L97.5 191.9L94.8 191.1L92.0 190.4L89.2 189.8L86.5 189.2L83.8 188.8L81.0 188.4L78.2 188.1L75.5 187.9L72.8 187.6L70.0 186.5z" fill="#8c8c8c" stroke="none" opacity="0.850"/><path d="M78.0 206.5L80.0 205.0L82.0 204.1L84.0 203.4L86.0 202.9L88.0 202.7L90.0 202.6L92.0 202.7L94.0 203.0L96.0 203.5L98.0 204.0L100.0 204.7L102.0 205.4L104.0 206.1L106.0 206.7L108.0 207.3L110.0 207.8L112.0 208.2L114.0 208.5L116.0 208.6L118.0 208.7L120.0 208.6L122.0 208.5L124.0 208.4L126.0 208.8L126.0 208.8L124.0 210.3L122.0 211.3L120.0 212.1L118.0 212.7L116.0 213.2L114.0 213.4L112.0 213.5L110.0 213.4L108.0 213.1L106.0 212.6L104.0 212.0L102.0 211.4L100.0 210.6L98.0 209.9L96.0 209.2L94.0 208.6L92.0 208.0L90.0 207.6L88.0 207.2L86.0 207.0L84.0 207.0L82.0 206.9L80.0 206.9L78.0 206.5z" fill="#8c8c8c" stroke="none" opacity="0.850"/><path d="M66.0 228.5L69.2 226.2L72.3 224.9L75.5 223.9L78.7 223.2L81.8 222.8L85.0 222.5L88.2 222.5L91.3 222.7L94.5 223.1L97.7 223.6L100.8 224.2L104.0 224.9L107.2 225.6L110.3 226.3L113.5 226.9L116.7 227.5L119.8 228.0L123.0 228.4L126.2 228.7L129.3 228.9L132.5 229.1L135.7 229.3L138.8 229.6L142.0 230.8L142.0 230.8L138.8 233.2L135.7 234.5L132.5 235.6L129.3 236.5L126.2 237.1L123.0 237.5L119.8 237.7L116.7 237.7L113.5 237.5L110.3 237.1L107.2 236.5L104.0 235.9L100.8 235.1L97.7 234.4L94.5 233.6L91.3 232.9L88.2 232.2L85.0 231.6L81.8 231.1L78.7 230.8L75.5 230.4L72.3 230.1L69.2 229.8L66.0 228.5z" fill="#8c8c8c" stroke="none" opacity="0.850"/><path d="M78.0 249.5L79.9 247.8L81.8 246.9L83.8 246.1L85.7 245.6L87.6 245.3L89.5 245.2L91.4 245.3L93.3 245.6L95.2 246.0L97.2 246.5L99.1 247.2L101.0 247.9L102.9 248.6L104.8 249.2L106.8 249.9L108.7 250.4L110.6 250.8L112.5 251.1L114.4 251.2L116.3 251.3L118.2 251.3L120.2 251.2L122.1 251.2L124.0 251.8L124.0 251.8L122.1 253.5L120.2 254.6L118.2 255.4L116.3 256.1L114.4 256.6L112.5 256.9L110.6 257.0L108.7 256.8L106.8 256.6L104.8 256.1L102.9 255.5L101.0 254.9L99.1 254.1L97.2 253.4L95.2 252.7L93.3 252.0L91.4 251.5L89.5 251.0L87.6 250.6L85.7 250.4L83.8 250.3L81.8 250.2L79.9 250.1L78.0 249.5z" fill="#8c8c8c" stroke="none" opacity="0.850"/><path d="M66.0 270.5L69.2 268.2L72.3 266.9L75.5 265.9L78.7 265.2L81.8 264.8L85.0 264.5L88.2 264.5L91.3 264.7L94.5 265.1L97.7 265.6L100.8 266.2L104.0 266.9L107.2 267.6L110.3 268.3L113.5 268.9L116.7 269.5L119.8 270.0L123.0 270.4L126.2 270.7L129.3 270.9L132.5 271.1L135.7 271.3L138.8 271.6L142.0 272.8L142.0 272.8L138.8 275.2L135.7 276.5L132.5 277.6L129.3 278.5L126.2 279.1L123.0 279.5L119.8 279.7L116.7 279.7L113.5 279.5L110.3 279.1L107.2 278.5L104.0 277.9L100.8 277.1L97.7 276.4L94.5 275.6L91.3 274.9L88.2 274.2L85.0 273.6L81.8 273.1L78.7 272.8L75.5 272.4L72.3 272.1L69.2 271.8L66.0 270.5z" fill="#8c8c8c" stroke="none" opacity="0.850"/><path d="M70.0 292.5L72.9 290.8L75.8 289.9L78.8 289.1L81.7 288.6L84.6 288.3L87.5 288.2L90.4 288.3L93.3 288.6L96.2 289.0L99.2 289.5L102.1 290.2L105.0 290.9L107.9 291.6L110.8 292.2L113.8 292.9L116.7 293.4L119.6 293.8L122.5 294.1L125.4 294.2L128.3 294.3L131.2 294.3L134.2 294.2L137.1 294.2L140.0 294.8L140.0 294.8L137.1 296.5L134.2 297.6L131.2 298.4L128.3 299.1L125.4 299.6L122.5 299.9L119.6 300.0L116.7 299.8L113.8 299.6L110.8 299.1L107.9 298.5L105.0 297.9L102.1 297.1L99.2 296.4L96.2 295.7L93.3 295.0L90.4 294.5L87.5 294.0L84.6 293.6L81.7 293.4L78.8 293.3L75.8 293.2L72.9 293.1L70.0 292.5z" fill="#8c8c8c" stroke="none" opacity="0.850"/><path d="M80.0 313.5L81.8 312.1L83.5 311.3L85.2 310.7L87.0 310.3L88.8 310.1L90.5 310.0L92.2 310.2L94.0 310.5L95.8 310.9L97.5 311.5L99.2 312.2L101.0 312.9L102.8 313.6L104.5 314.2L106.2 314.8L108.0 315.3L109.8 315.7L111.5 315.9L113.2 316.0L115.0 316.0L116.8 315.9L118.5 315.7L120.2 315.5L122.0 315.8L122.0 315.8L120.2 317.2L118.5 318.1L116.8 318.8L115.0 319.4L113.2 319.8L111.5 320.0L109.8 320.1L108.0 319.9L106.2 319.6L104.5 319.1L102.8 318.5L101.0 317.9L99.2 317.2L97.5 316.4L95.8 315.7L94.0 315.1L92.2 314.6L90.5 314.2L88.8 313.9L87.0 313.7L85.2 313.7L83.5 313.7L81.8 313.8L80.0 313.5z" fill="#8c8c8c" stroke="none" opacity="0.850"/><path d="M68.0 334.5L71.1 333.0L74.2 332.2L77.2 331.5L80.3 331.1L83.4 330.8L86.5 330.8L89.6 330.9L92.7 331.2L95.8 331.7L98.8 332.2L101.9 332.9L105.0 333.6L108.1 334.3L111.2 334.9L114.2 335.5L117.3 336.0L120.4 336.4L123.5 336.7L126.6 336.8L129.7 336.8L132.8 336.7L135.8 336.6L138.9 336.4L142.0 336.8L142.0 336.8L138.9 338.3L135.8 339.2L132.8 340.0L129.7 340.6L126.6 341.0L123.5 341.3L120.4 341.3L117.3 341.2L114.2 340.9L111.2 340.4L108.1 339.8L105.0 339.2L101.9 338.4L98.8 337.7L95.8 337.0L92.7 336.4L89.6 335.8L86.5 335.4L83.4 335.1L80.3 334.9L77.2 334.8L74.2 334.8L71.1 334.9L68.0 334.5z" fill="#8c8c8c" stroke="none" opacity="0.850"/><path d="M70.0 355.5L72.6 353.5L75.2 352.4L77.8 351.5L80.3 350.9L82.9 350.5L85.5 350.4L88.1 350.4L90.7 350.6L93.2 351.0L95.8 351.6L98.4 352.2L101.0 352.9L103.6 353.6L106.2 354.3L108.8 354.9L111.3 355.5L113.9 355.9L116.5 356.3L119.1 356.5L121.7 356.6L124.2 356.7L126.8 356.8L129.4 356.9L132.0 357.8L132.0 357.8L129.4 359.8L126.8 361.0L124.2 362.0L121.7 362.8L119.1 363.3L116.5 363.7L113.9 363.8L111.3 363.8L108.8 363.5L106.2 363.1L103.6 362.5L101.0 361.9L98.4 361.1L95.8 360.4L93.2 359.6L90.7 359.0L88.1 358.3L85.5 357.8L82.9 357.4L80.3 357.1L77.8 356.8L75.2 356.7L72.6 356.4L70.0 355.5z" fill="#8c8c8c" stroke="none" opacity="0.850"/><path d="M70.0 375.5L72.2 374.1L74.5 373.3L76.8 372.7L79.0 372.3L81.2 372.1L83.5 372.0L85.8 372.2L88.0 372.5L90.2 372.9L92.5 373.5L94.8 374.2L97.0 374.9L99.2 375.6L101.5 376.2L103.8 376.8L106.0 377.3L108.2 377.7L110.5 377.9L112.8 378.0L115.0 378.0L117.2 377.9L119.5 377.7L121.8 377.5L124.0 377.8L124.0 377.8L121.8 379.2L119.5 380.1L117.2 380.8L115.0 381.4L112.8 381.8L110.5 382.0L108.2 382.1L106.0 381.9L103.8 381.6L101.5 381.1L99.2 380.5L97.0 379.9L94.8 379.2L92.5 378.4L90.2 377.7L88.0 377.1L85.8 376.6L83.5 376.2L81.2 375.9L79.0 375.7L76.8 375.7L74.5 375.7L72.2 375.8L70.0 375.5z" fill="#8c8c8c" stroke="none" opacity="0.850"/></g><g filter="url(#bb2)"><circle cx="40" cy="118" r="3.5" fill="#707070"/><circle cx="61" cy="118" r="3.5" fill="#787878"/><circle cx="82" cy="118" r="2" fill="#8a8a8a"/><circle cx="103" cy="118" r="2" fill="#808080"/><circle cx="125" cy="118" r="3.5" fill="#787878"/><circle cx="147" cy="118" r="3" fill="#626262"/><circle cx="39" cy="140" r="2.5" fill="#808080"/><circle cx="39" cy="161" r="5" fill="#767676"/><circle cx="39" cy="183" r="3.5" fill="#6c6c6c"/><rect x="38" y="216" width="2.500" height="11" rx="1" fill="#7a7a7a"/><rect x="36" y="262" width="5" height="12" fill="#777"/><rect x="38.500" y="282" width="1.500" height="12" fill="#777"/><path d="M33 330l8-3 6 4-7 3z" fill="#7c7c7c"/><rect x="35" y="349" width="7" height="14" rx="2" fill="#737373"/><rect x="38" y="366" width="1.500" height="12" fill="#707070"/></g></svg>
<span class="t" style="left:34px;top:150px;font-size:7px;color:#626262;">15</span>
<span class="t" style="left:34px;top:172px;font-size:7px;color:#626262;">25</span>
<span class="t" style="left:34px;top:194px;font-size:7px;color:#626262;">35</span>
<span class="t" style="left:34px;top:236px;font-size:7px;color:#626262;">150</span>
<span class="t" style="left:34px;top:258px;font-size:7px;color:#626262;">71</span>
<span class="t" style="left:34px;top:297px;font-size:7px;color:#626262;">200</span>
<span class="t" style="left:34px;top:320px;font-size:7px;color:#626262;">50</span>
<span class="t" style="left:34px;top:343px;font-size:7px;color:#626262;">70</span>
<svg style="left:90px;top:383px" width="14" height="9" viewBox="0 0 14 9"><path d="M0.500 4.500c2-3.500 6-3.500 8 0-2 3.500-6 3.500-8 0z" fill="none" stroke="#b0b0b0" stroke-width="0.900"/><path d="M8 8l4.500-6" stroke="#b0b0b0" stroke-width="1.200"/></svg>
<div style="left:111px;top:383px;width:9px;height:9px;background:#e4e4e4;border-radius:1px;"></div>
<div style="left:112.5px;top:384.5px;width:2.5px;height:2.5px;background:#555;"></div>
<div style="left:116px;top:384.5px;width:2.5px;height:2.5px;background:#555;"></div>
<div style="left:112.5px;top:388px;width:2.5px;height:2.5px;background:#555;"></div>
<svg style="left:132px;top:383px" width="9" height="9" viewBox="0 0 9 9"><path d="M2.500 0.500h6v8h-6zM0.500 5.500h3v3" fill="none" stroke="#8d8d8d" stroke-width="0.900"/></svg>
<svg style="left:152px;top:382px" width="8" height="10" viewBox="0 0 8 10"><path d="M1 2.500h6v7h-6zM0 2.500h8M3 0.800h2M3 4.500v3M5 4.500v3" fill="none" stroke="#8d8d8d" stroke-width="0.900"/></svg>
<span class="t" style="left:1266px;top:43px;font-size:8px;color:#bdbdbd;">»</span>
<div style="left:1104px;top:50px;width:171px;height:12px;background:#424242;"></div>
<div style="left:1104px;top:50px;width:44px;height:12px;background:#535353;"></div>
<span class="t" style="left:1108px;top:52.5px;font-size:7.5px;color:#f0f0f0;font-weight:bold;">Navigator</span>
<div style="left:1265px;top:54px;width:6px;height:1px;background:#c0c0c0;"></div>
<div style="left:1265px;top:56px;width:6px;height:1px;background:#c0c0c0;"></div>
<div style="left:1265px;top:58px;width:6px;height:1px;background:#8c8c8c;"></div>
<div style="left:1104px;top:62px;width:171px;height:90px;background:#535353;"></div>
<div style="left:1144px;top:64px;width:92px;height:69px;background:#7a2a35;"></div>
<svg style="left:1145px;top:65px;overflow:hidden" width="90" height="67" viewBox="227 118 665 499" preserveAspectRatio="none"><use href="#artwork"/></svg>
<span class="t" style="left:1106px;top:141px;font-size:7px;color:#e8e8e8;">50%</span>
<svg style="left:1146px;top:143px" width="7" height="4" viewBox="0 0 7 4"><path d="M0 4l2-2.500 1 1 1.500-2 2.500 3.500z" fill="#dcdcdc"/></svg>
<div style="left:1162px;top:143px;width:80px;height:1px;background:#6c6c6c;"></div>
<svg style="left:1194px;top:143px" width="7" height="6" viewBox="0 0 7 6"><path d="M3.500 0.500l3 5h-6z" fill="#f0f0f0" stroke="#333" stroke-width="0.500"/></svg>
<svg style="left:1249px;top:141px" width="13" height="6" viewBox="0 0 13 6"><path d="M0 6l3.500-4.500 2 2 2.500-3.500 5 6z" fill="#e6e6e6"/></svg>
<div style="left:1104px;top:152px;width:171px;height:2px;background:#3e3e3e;"></div>
<div style="left:1104px;top:154px;width:171px;height:12px;background:#424242;"></div>
<div style="left:1104px;top:154px;width:41px;height:12px;background:#535353;"></div>
<span class="t" style="left:1108px;top:156.5px;font-size:7.5px;color:#f0f0f0;font-weight:bold;">Swatches</span>
<div style="left:1265px;top:158px;width:6px;height:1px;background:#c0c0c0;"></div>
<div style="left:1265px;top:160px;width:6px;height:1px;background:#c0c0c0;"></div>
<div style="left:1265px;top:162px;width:6px;height:1px;background:#8c8c8c;"></div>
<div style="left:1104px;top:166px;width:171px;height:196px;background:#535353;"></div>
<div style="left:1107.5px;top:172px;width:10.67px;height:10px;background:#7a3a3a;border-right:1px solid #3a2a28;box-sizing:border-box;"></div>
<div style="left:1118.17px;top:172px;width:10.67px;height:10px;background:#000000;border-right:1px solid #3a2a28;box-sizing:border-box;"></div>
<div style="left:1128.84px;top:172px;width:10.67px;height:10px;background:#e5c2b4;border-right:1px solid #3a2a28;box-sizing:border-box;"></div>
<div style="left:1139.51px;top:172px;width:10.67px;height:10px;background:#dfb8a6;border-right:1px solid #3a2a28;box-sizing:border-box;"></div>
<div style="left:1150.18px;top:172px;width:10.67px;height:10px;background:#d1a896;border-right:1px solid #3a2a28;box-sizing:border-box;"></div>
<div style="left:1160.85px;top:172px;width:10.67px;height:10px;background:#e9c6b6;border-right:1px solid #3a2a28;box-sizing:border-box;"></div>
<div style="left:1171.52px;top:172px;width:10.67px;height:10px;background:#ebc9ba;border-right:1px solid #3a2a28;box-sizing:border-box;"></div>
<div style="left:1182.19px;top:172px;width:10.67px;height:10px;background:#d2a999;border-right:1px solid #3a2a28;box-sizing:border-box;"></div>
<div style="left:1192.86px;top:172px;width:10.67px;height:10px;background:#6a3024;border-right:1px solid #3a2a28;box-sizing:border-box;"></div>
<div style="left:1203.53px;top:172px;width:10.67px;height:10px;background:#b07f72;border-right:1px solid #3a2a28;box-sizing:border-box;"></div>
<div style="left:1214.2px;top:172px;width:10.67px;height:10px;background:#8d4a3c;border-right:1px solid #3a2a28;box-sizing:border-box;"></div>
<div style="left:1224.87px;top:172px;width:10.67px;height:10px;background:#dcb7a8;border-right:1px solid #3a2a28;box-sizing:border-box;"></div>
<div style="left:1235.54px;top:172px;width:10.67px;height:10px;background:#ecccbc;border-right:1px solid #3a2a28;box-sizing:border-box;"></div>
<div style="left:1246.21px;top:172px;width:10.67px;height:10px;background:#d8b09e;border-right:1px solid #3a2a28;box-sizing:border-box;"></div>
<div style="left:1256.88px;top:172px;width:10.67px;height:10px;background:#d9b5a6;border-right:1px solid #3a2a28;box-sizing:border-box;"></div>
<svg style="left:1104px;top:186px" width="160" height="160" viewBox="0 0 160 160"><rect x="-1" y="-1" width="161" height="161" fill="#1e1e1e"/><rect x="0" y="0" width="7" height="7" fill="#ffffff"/><rect x="8" y="0" width="7" height="7" fill="#ffffff"/><rect x="16" y="0" width="7" height="7" fill="#ffffff"/><rect x="24" y="0" width="7" height="7" fill="#ffffff"/><rect x="32" y="0" width="7" height="7" fill="#ffffff"/><rect x="40" y="0" width="7" height="7" fill="#ffffff"/><rect x="48" y="0" width="7" height="7" fill="#ecedd6"/><rect x="56" y="0" width="7" height="7" fill="#ecedd6"/><rect x="64" y="0" width="7" height="7" fill="#e3e6c6"/><rect x="72" y="0" width="7" height="7" fill="#e3e6c6"/><rect x="80" y="0" width="7" height="7" fill="#d6dcb6"/><rect x="88" y="0" width="7" height="7" fill="#d6dcb6"/><rect x="96" y="0" width="7" height="7" fill="#d2dab4"/><rect x="104" y="0" width="7" height="7" fill="#d2dab4"/><rect x="112" y="0" width="7" height="7" fill="#ffffff"/><rect x="120" y="0" width="7" height="7" fill="#ffffff"/><rect x="128" y="0" width="7" height="7" fill="#ffffff"/><rect x="136" y="0" width="7" height="7" fill="#ffffff"/><rect x="144" y="0" width="7" height="7" fill="#ffffff"/><rect x="152" y="0" width="7" height="7" fill="#ffffff"/><rect x="0" y="8" width="7" height="7" fill="#ffffff"/><rect x="8" y="8" width="7" height="7" fill="#ffffff"/><rect x="16" y="8" width="7" height="7" fill="#ffffff"/><rect x="24" y="8" width="7" height="7" fill="#ffffff"/><rect x="32" y="8" width="7" height="7" fill="#ffffff"/><rect x="40" y="8" width="7" height="7" fill="#f0efe0"/><rect x="48" y="8" width="7" height="7" fill="#ecedd0"/><rect x="56" y="8" width="7" height="7" fill="#ecedd0"/><rect x="64" y="8" width="7" height="7" fill="#e4e8c4"/><rect x="72" y="8" width="7" height="7" fill="#e4e8c4"/><rect x="80" y="8" width="7" height="7" fill="#d4dcb4"/><rect x="88" y="8" width="7" height="7" fill="#d4dcb4"/><rect x="96" y="8" width="7" height="7" fill="#d0d9b6"/><rect x="104" y="8" width="7" height="7" fill="#d0d9b6"/><rect x="112" y="8" width="7" height="7" fill="#d3dbc0"/><rect x="120" y="8" width="7" height="7" fill="#ffffff"/><rect x="128" y="8" width="7" height="7" fill="#ffffff"/><rect x="136" y="8" width="7" height="7" fill="#ffffff"/><rect x="144" y="8" width="7" height="7" fill="#ffffff"/><rect x="152" y="8" width="7" height="7" fill="#ffffff"/><rect x="0" y="16" width="7" height="7" fill="#ffffff"/><rect x="8" y="16" width="7" height="7" fill="#ffffff"/><rect x="16" y="16" width="7" height="7" fill="#ffffff"/><rect x="24" y="16" width="7" height="7" fill="#d9cdb4"/><rect x="32" y="16" width="7" height="7" fill="#d9cdb4"/><rect x="40" y="16" width="7" height="7" fill="#d9cdb4"/><rect x="48" y="16" width="7" height="7" fill="#efecc4"/><rect x="56" y="16" width="7" height="7" fill="#f0ee98"/><rect x="64" y="16" width="7" height="7" fill="#f0ee98"/><rect x="72" y="16" width="7" height="7" fill="#f0ee98"/><rect x="80" y="16" width="7" height="7" fill="#cbda8c"/><rect x="88" y="16" width="7" height="7" fill="#cbda8c"/><rect x="96" y="16" width="7" height="7" fill="#cbda8c"/><rect x="104" y="16" width="7" height="7" fill="#c5d4a2"/><rect x="112" y="16" width="7" height="7" fill="#a9c09a"/><rect x="120" y="16" width="7" height="7" fill="#a9c09a"/><rect x="128" y="16" width="7" height="7" fill="#a9c09a"/><rect x="136" y="16" width="7" height="7" fill="#ffffff"/><rect x="144" y="16" width="7" height="7" fill="#ffffff"/><rect x="152" y="16" width="7" height="7" fill="#ffffff"/><rect x="0" y="24" width="7" height="7" fill="#ffffff"/><rect x="8" y="24" width="7" height="7" fill="#ffffff"/><rect x="16" y="24" width="7" height="7" fill="#d8cbb0"/><rect x="24" y="24" width="7" height="7" fill="#d8cbb0"/><rect x="32" y="24" width="7" height="7" fill="#d8cbb0"/><rect x="40" y="24" width="7" height="7" fill="#d8cbb0"/><rect x="48" y="24" width="7" height="7" fill="#f2ee92"/><rect x="56" y="24" width="7" height="7" fill="#f2ee92"/><rect x="64" y="24" width="7" height="7" fill="#f2ee92"/><rect x="72" y="24" width="7" height="7" fill="#f2ee92"/><rect x="80" y="24" width="7" height="7" fill="#bfd67c"/><rect x="88" y="24" width="7" height="7" fill="#bfd67c"/><rect x="96" y="24" width="7" height="7" fill="#bfd67c"/><rect x="104" y="24" width="7" height="7" fill="#bfd67c"/><rect x="112" y="24" width="7" height="7" fill="#a3c092"/><rect x="120" y="24" width="7" height="7" fill="#a3c092"/><rect x="128" y="24" width="7" height="7" fill="#a3c092"/><rect x="136" y="24" width="7" height="7" fill="#a3c092"/><rect x="144" y="24" width="7" height="7" fill="#ffffff"/><rect x="152" y="24" width="7" height="7" fill="#ffffff"/><rect x="0" y="32" width="7" height="7" fill="#ffffff"/><rect x="8" y="32" width="7" height="7" fill="#ffffff"/><rect x="16" y="32" width="7" height="7" fill="#d8c8a8"/><rect x="24" y="32" width="7" height="7" fill="#d8c8a8"/><rect x="32" y="32" width="7" height="7" fill="#d8c8a8"/><rect x="40" y="32" width="7" height="7" fill="#e6d892"/><rect x="48" y="32" width="7" height="7" fill="#e6d892"/><rect x="56" y="32" width="7" height="7" fill="#f4ec44"/><rect x="64" y="32" width="7" height="7" fill="#f4ec44"/><rect x="72" y="32" width="7" height="7" fill="#f4ec44"/><rect x="80" y="32" width="7" height="7" fill="#a8d834"/><rect x="88" y="32" width="7" height="7" fill="#a8d834"/><rect x="96" y="32" width="7" height="7" fill="#a8d834"/><rect x="104" y="32" width="7" height="7" fill="#80c060"/><rect x="112" y="32" width="7" height="7" fill="#80c060"/><rect x="120" y="32" width="7" height="7" fill="#98bc92"/><rect x="128" y="32" width="7" height="7" fill="#98bc92"/><rect x="136" y="32" width="7" height="7" fill="#98bc92"/><rect x="144" y="32" width="7" height="7" fill="#ffffff"/><rect x="152" y="32" width="7" height="7" fill="#ffffff"/><rect x="0" y="40" width="7" height="7" fill="#ffffff"/><rect x="8" y="40" width="7" height="7" fill="#c8b092"/><rect x="16" y="40" width="7" height="7" fill="#dcc8a0"/><rect x="24" y="40" width="7" height="7" fill="#dcc8a0"/><rect x="32" y="40" width="7" height="7" fill="#ecd882"/><rect x="40" y="40" width="7" height="7" fill="#ecd882"/><rect x="48" y="40" width="7" height="7" fill="#ecd882"/><rect x="56" y="40" width="7" height="7" fill="#f0c444"/><rect x="64" y="40" width="7" height="7" fill="#f8ec34"/><rect x="72" y="40" width="7" height="7" fill="#f8ec34"/><rect x="80" y="40" width="7" height="7" fill="#a0d82c"/><rect x="88" y="40" width="7" height="7" fill="#a0d82c"/><rect x="96" y="40" width="7" height="7" fill="#48c032"/><rect x="104" y="40" width="7" height="7" fill="#48c032"/><rect x="112" y="40" width="7" height="7" fill="#60b862"/><rect x="120" y="40" width="7" height="7" fill="#60b862"/><rect x="128" y="40" width="7" height="7" fill="#98b89a"/><rect x="136" y="40" width="7" height="7" fill="#98b89a"/><rect x="144" y="40" width="7" height="7" fill="#789088"/><rect x="152" y="40" width="7" height="7" fill="#ffffff"/><rect x="0" y="48" width="7" height="7" fill="#c8a882"/><rect x="8" y="48" width="7" height="7" fill="#c8a882"/><rect x="16" y="48" width="7" height="7" fill="#c8a882"/><rect x="24" y="48" width="7" height="7" fill="#dca862"/><rect x="32" y="48" width="7" height="7" fill="#ecd072"/><rect x="40" y="48" width="7" height="7" fill="#ecd072"/><rect x="48" y="48" width="7" height="7" fill="#f0b832"/><rect x="56" y="48" width="7" height="7" fill="#f0b832"/><rect x="64" y="48" width="7" height="7" fill="#ffffff"/><rect x="72" y="48" width="7" height="7" fill="#ffffff"/><rect x="80" y="48" width="7" height="7" fill="#ffffff"/><rect x="88" y="48" width="7" height="7" fill="#ffffff"/><rect x="96" y="48" width="7" height="7" fill="#38b82a"/><rect x="104" y="48" width="7" height="7" fill="#38b82a"/><rect x="112" y="48" width="7" height="7" fill="#50b852"/><rect x="120" y="48" width="7" height="7" fill="#50b852"/><rect x="128" y="48" width="7" height="7" fill="#488878"/><rect x="136" y="48" width="7" height="7" fill="#488878"/><rect x="144" y="48" width="7" height="7" fill="#488878"/><rect x="152" y="48" width="7" height="7" fill="#488878"/><rect x="0" y="56" width="7" height="7" fill="#c8a080"/><rect x="8" y="56" width="7" height="7" fill="#c8a080"/><rect x="16" y="56" width="7" height="7" fill="#d8a060"/><rect x="24" y="56" width="7" height="7" fill="#d8a060"/><rect x="32" y="56" width="7" height="7" fill="#f08822"/><rect x="40" y="56" width="7" height="7" fill="#f0c032"/><rect x="48" y="56" width="7" height="7" fill="#f0c032"/><rect x="56" y="56" width="7" height="7" fill="#ffffff"/><rect x="64" y="56" width="7" height="7" fill="#ffffff"/><rect x="72" y="56" width="7" height="7" fill="#ffffff"/><rect x="80" y="56" width="7" height="7" fill="#ffffff"/><rect x="88" y="56" width="7" height="7" fill="#ffffff"/><rect x="96" y="56" width="7" height="7" fill="#ffffff"/><rect x="104" y="56" width="7" height="7" fill="#38b832"/><rect x="112" y="56" width="7" height="7" fill="#38b832"/><rect x="120" y="56" width="7" height="7" fill="#309080"/><rect x="128" y="56" width="7" height="7" fill="#309080"/><rect x="136" y="56" width="7" height="7" fill="#3a8074"/><rect x="144" y="56" width="7" height="7" fill="#3a8074"/><rect x="152" y="56" width="7" height="7" fill="#3a8074"/><rect x="0" y="64" width="7" height="7" fill="#c8a080"/><rect x="8" y="64" width="7" height="7" fill="#d09858"/><rect x="16" y="64" width="7" height="7" fill="#d09858"/><rect x="24" y="64" width="7" height="7" fill="#d09858"/><rect x="32" y="64" width="7" height="7" fill="#f07818"/><rect x="40" y="64" width="7" height="7" fill="#f07818"/><rect x="48" y="64" width="7" height="7" fill="#ffffff"/><rect x="56" y="64" width="7" height="7" fill="#ffffff"/><rect x="64" y="64" width="7" height="7" fill="#ffffff"/><rect x="72" y="64" width="7" height="7" fill="#ffffff"/><rect x="80" y="64" width="7" height="7" fill="#ffffff"/><rect x="88" y="64" width="7" height="7" fill="#ffffff"/><rect x="96" y="64" width="7" height="7" fill="#ffffff"/><rect x="104" y="64" width="7" height="7" fill="#ffffff"/><rect x="112" y="64" width="7" height="7" fill="#208a80"/><rect x="120" y="64" width="7" height="7" fill="#208a80"/><rect x="128" y="64" width="7" height="7" fill="#387a72"/><rect x="136" y="64" width="7" height="7" fill="#387a72"/><rect x="144" y="64" width="7" height="7" fill="#387a72"/><rect x="152" y="64" width="7" height="7" fill="#387a72"/><rect x="0" y="72" width="7" height="7" fill="#c8a080"/><rect x="8" y="72" width="7" height="7" fill="#d09858"/><rect x="16" y="72" width="7" height="7" fill="#d09858"/><rect x="24" y="72" width="7" height="7" fill="#d09858"/><rect x="32" y="72" width="7" height="7" fill="#f07018"/><rect x="40" y="72" width="7" height="7" fill="#f07018"/><rect x="48" y="72" width="7" height="7" fill="#ffffff"/><rect x="56" y="72" width="7" height="7" fill="#ffffff"/><rect x="64" y="72" width="7" height="7" fill="#ffffff"/><rect x="72" y="72" width="7" height="7" fill="#ffffff"/><rect x="80" y="72" width="7" height="7" fill="#ffffff"/><rect x="88" y="72" width="7" height="7" fill="#ffffff"/><rect x="96" y="72" width="7" height="7" fill="#ffffff"/><rect x="104" y="72" width="7" height="7" fill="#ffffff"/><rect x="112" y="72" width="7" height="7" fill="#208880"/><rect x="120" y="72" width="7" height="7" fill="#208880"/><rect x="128" y="72" width="7" height="7" fill="#387872"/><rect x="136" y="72" width="7" height="7" fill="#387872"/><rect x="144" y="72" width="7" height="7" fill="#387872"/><rect x="152" y="72" width="7" height="7" fill="#387872"/><rect x="0" y="80" width="7" height="7" fill="#c8a080"/><rect x="8" y="80" width="7" height="7" fill="#d0a070"/><rect x="16" y="80" width="7" height="7" fill="#d89050"/><rect x="24" y="80" width="7" height="7" fill="#d89050"/><rect x="32" y="80" width="7" height="7" fill="#f06818"/><rect x="40" y="80" width="7" height="7" fill="#f06818"/><rect x="48" y="80" width="7" height="7" fill="#ffffff"/><rect x="56" y="80" width="7" height="7" fill="#ffffff"/><rect x="64" y="80" width="7" height="7" fill="#ffffff"/><rect x="72" y="80" width="7" height="7" fill="#ffffff"/><rect x="80" y="80" width="7" height="7" fill="#ffffff"/><rect x="88" y="80" width="7" height="7" fill="#ffffff"/><rect x="96" y="80" width="7" height="7" fill="#ffffff"/><rect x="104" y="80" width="7" height="7" fill="#ffffff"/><rect x="112" y="80" width="7" height="7" fill="#1870d8"/><rect x="120" y="80" width="7" height="7" fill="#1870d8"/><rect x="128" y="80" width="7" height="7" fill="#3070a8"/><rect x="136" y="80" width="7" height="7" fill="#3070a8"/><rect x="144" y="80" width="7" height="7" fill="#3070a8"/><rect x="152" y="80" width="7" height="7" fill="#3070a8"/><rect x="0" y="88" width="7" height="7" fill="#c09878"/><rect x="8" y="88" width="7" height="7" fill="#c89870"/><rect x="16" y="88" width="7" height="7" fill="#d88848"/><rect x="24" y="88" width="7" height="7" fill="#d88848"/><rect x="32" y="88" width="7" height="7" fill="#f06018"/><rect x="40" y="88" width="7" height="7" fill="#f06018"/><rect x="48" y="88" width="7" height="7" fill="#ffffff"/><rect x="56" y="88" width="7" height="7" fill="#ffffff"/><rect x="64" y="88" width="7" height="7" fill="#ffffff"/><rect x="72" y="88" width="7" height="7" fill="#ffffff"/><rect x="80" y="88" width="7" height="7" fill="#ffffff"/><rect x="88" y="88" width="7" height="7" fill="#ffffff"/><rect x="96" y="88" width="7" height="7" fill="#ffffff"/><rect x="104" y="88" width="7" height="7" fill="#ffffff"/><rect x="112" y="88" width="7" height="7" fill="#1868d8"/><rect x="120" y="88" width="7" height="7" fill="#1868d8"/><rect x="128" y="88" width="7" height="7" fill="#3070b8"/><rect x="136" y="88" width="7" height="7" fill="#3070b8"/><rect x="144" y="88" width="7" height="7" fill="#3070b8"/><rect x="152" y="88" width="7" height="7" fill="#3070b8"/><rect x="0" y="96" width="7" height="7" fill="#c09070"/><rect x="8" y="96" width="7" height="7" fill="#c09070"/><rect x="16" y="96" width="7" height="7" fill="#d08048"/><rect x="24" y="96" width="7" height="7" fill="#d08048"/><rect x="32" y="96" width="7" height="7" fill="#e86020"/><rect x="40" y="96" width="7" height="7" fill="#e01818"/><rect x="48" y="96" width="7" height="7" fill="#e01818"/><rect x="56" y="96" width="7" height="7" fill="#ffffff"/><rect x="64" y="96" width="7" height="7" fill="#ffffff"/><rect x="72" y="96" width="7" height="7" fill="#ffffff"/><rect x="80" y="96" width="7" height="7" fill="#ffffff"/><rect x="88" y="96" width="7" height="7" fill="#ffffff"/><rect x="96" y="96" width="7" height="7" fill="#ffffff"/><rect x="104" y="96" width="7" height="7" fill="#4020c8"/><rect x="112" y="96" width="7" height="7" fill="#4020c8"/><rect x="120" y="96" width="7" height="7" fill="#2060d0"/><rect x="128" y="96" width="7" height="7" fill="#2060d0"/><rect x="136" y="96" width="7" height="7" fill="#4070b0"/><rect x="144" y="96" width="7" height="7" fill="#4070b0"/><rect x="152" y="96" width="7" height="7" fill="#4070b0"/><rect x="0" y="104" width="7" height="7" fill="#c09070"/><rect x="8" y="104" width="7" height="7" fill="#c09070"/><rect x="16" y="104" width="7" height="7" fill="#d08050"/><rect x="24" y="104" width="7" height="7" fill="#d08050"/><rect x="32" y="104" width="7" height="7" fill="#e04830"/><rect x="40" y="104" width="7" height="7" fill="#e04830"/><rect x="48" y="104" width="7" height="7" fill="#e01018"/><rect x="56" y="104" width="7" height="7" fill="#e01018"/><rect x="64" y="104" width="7" height="7" fill="#ffffff"/><rect x="72" y="104" width="7" height="7" fill="#ffffff"/><rect x="80" y="104" width="7" height="7" fill="#ffffff"/><rect x="88" y="104" width="7" height="7" fill="#ffffff"/><rect x="96" y="104" width="7" height="7" fill="#4828c8"/><rect x="104" y="104" width="7" height="7" fill="#4828c8"/><rect x="112" y="104" width="7" height="7" fill="#5038a0"/><rect x="120" y="104" width="7" height="7" fill="#5038a0"/><rect x="128" y="104" width="7" height="7" fill="#4878b4"/><rect x="136" y="104" width="7" height="7" fill="#4878b4"/><rect x="144" y="104" width="7" height="7" fill="#4878b4"/><rect x="152" y="104" width="7" height="7" fill="#4878b4"/><rect x="0" y="112" width="7" height="7" fill="#ffffff"/><rect x="8" y="112" width="7" height="7" fill="#c09078"/><rect x="16" y="112" width="7" height="7" fill="#b87058"/><rect x="24" y="112" width="7" height="7" fill="#b87058"/><rect x="32" y="112" width="7" height="7" fill="#e04830"/><rect x="40" y="112" width="7" height="7" fill="#e04830"/><rect x="48" y="112" width="7" height="7" fill="#e01018"/><rect x="56" y="112" width="7" height="7" fill="#a01050"/><rect x="64" y="112" width="7" height="7" fill="#a01050"/><rect x="72" y="112" width="7" height="7" fill="#601888"/><rect x="80" y="112" width="7" height="7" fill="#601888"/><rect x="88" y="112" width="7" height="7" fill="#5020d0"/><rect x="96" y="112" width="7" height="7" fill="#503890"/><rect x="104" y="112" width="7" height="7" fill="#503890"/><rect x="112" y="112" width="7" height="7" fill="#503890"/><rect x="120" y="112" width="7" height="7" fill="#503890"/><rect x="128" y="112" width="7" height="7" fill="#503890"/><rect x="136" y="112" width="7" height="7" fill="#4868a0"/><rect x="144" y="112" width="7" height="7" fill="#ffffff"/><rect x="152" y="112" width="7" height="7" fill="#ffffff"/><rect x="0" y="120" width="7" height="7" fill="#ffffff"/><rect x="8" y="120" width="7" height="7" fill="#b07860"/><rect x="16" y="120" width="7" height="7" fill="#b07860"/><rect x="24" y="120" width="7" height="7" fill="#b07860"/><rect x="32" y="120" width="7" height="7" fill="#e05038"/><rect x="40" y="120" width="7" height="7" fill="#e05038"/><rect x="48" y="120" width="7" height="7" fill="#b01848"/><rect x="56" y="120" width="7" height="7" fill="#b01848"/><rect x="64" y="120" width="7" height="7" fill="#b01848"/><rect x="72" y="120" width="7" height="7" fill="#581880"/><rect x="80" y="120" width="7" height="7" fill="#581880"/><rect x="88" y="120" width="7" height="7" fill="#581880"/><rect x="96" y="120" width="7" height="7" fill="#503888"/><rect x="104" y="120" width="7" height="7" fill="#503888"/><rect x="112" y="120" width="7" height="7" fill="#503888"/><rect x="120" y="120" width="7" height="7" fill="#503888"/><rect x="128" y="120" width="7" height="7" fill="#503888"/><rect x="136" y="120" width="7" height="7" fill="#ffffff"/><rect x="144" y="120" width="7" height="7" fill="#ffffff"/><rect x="152" y="120" width="7" height="7" fill="#ffffff"/><rect x="0" y="128" width="7" height="7" fill="#ffffff"/><rect x="8" y="128" width="7" height="7" fill="#a87060"/><rect x="16" y="128" width="7" height="7" fill="#a87060"/><rect x="24" y="128" width="7" height="7" fill="#a87060"/><rect x="32" y="128" width="7" height="7" fill="#703858"/><rect x="40" y="128" width="7" height="7" fill="#703858"/><rect x="48" y="128" width="7" height="7" fill="#703858"/><rect x="56" y="128" width="7" height="7" fill="#703858"/><rect x="64" y="128" width="7" height="7" fill="#482058"/><rect x="72" y="128" width="7" height="7" fill="#482058"/><rect x="80" y="128" width="7" height="7" fill="#482058"/><rect x="88" y="128" width="7" height="7" fill="#482058"/><rect x="96" y="128" width="7" height="7" fill="#503880"/><rect x="104" y="128" width="7" height="7" fill="#503880"/><rect x="112" y="128" width="7" height="7" fill="#503880"/><rect x="120" y="128" width="7" height="7" fill="#503880"/><rect x="128" y="128" width="7" height="7" fill="#ffffff"/><rect x="136" y="128" width="7" height="7" fill="#ffffff"/><rect x="144" y="128" width="7" height="7" fill="#ffffff"/><rect x="152" y="128" width="7" height="7" fill="#ffffff"/><rect x="0" y="136" width="7" height="7" fill="#ffffff"/><rect x="8" y="136" width="7" height="7" fill="#b07868"/><rect x="16" y="136" width="7" height="7" fill="#b07868"/><rect x="24" y="136" width="7" height="7" fill="#b07868"/><rect x="32" y="136" width="7" height="7" fill="#703858"/><rect x="40" y="136" width="7" height="7" fill="#703858"/><rect x="48" y="136" width="7" height="7" fill="#703858"/><rect x="56" y="136" width="7" height="7" fill="#703858"/><rect x="64" y="136" width="7" height="7" fill="#482050"/><rect x="72" y="136" width="7" height="7" fill="#482050"/><rect x="80" y="136" width="7" height="7" fill="#482050"/><rect x="88" y="136" width="7" height="7" fill="#482050"/><rect x="96" y="136" width="7" height="7" fill="#503878"/><rect x="104" y="136" width="7" height="7" fill="#503878"/><rect x="112" y="136" width="7" height="7" fill="#503878"/><rect x="120" y="136" width="7" height="7" fill="#ffffff"/><rect x="128" y="136" width="7" height="7" fill="#ffffff"/><rect x="136" y="136" width="7" height="7" fill="#ffffff"/><rect x="144" y="136" width="7" height="7" fill="#ffffff"/><rect x="152" y="136" width="7" height="7" fill="#ffffff"/><rect x="0" y="144" width="7" height="7" fill="#ffffff"/><rect x="8" y="144" width="7" height="7" fill="#ffffff"/><rect x="16" y="144" width="7" height="7" fill="#ffffff"/><rect x="24" y="144" width="7" height="7" fill="#504048"/><rect x="32" y="144" width="7" height="7" fill="#683850"/><rect x="40" y="144" width="7" height="7" fill="#683850"/><rect x="48" y="144" width="7" height="7" fill="#683850"/><rect x="56" y="144" width="7" height="7" fill="#683850"/><rect x="64" y="144" width="7" height="7" fill="#40284c"/><rect x="72" y="144" width="7" height="7" fill="#40284c"/><rect x="80" y="144" width="7" height="7" fill="#40284c"/><rect x="88" y="144" width="7" height="7" fill="#40284c"/><rect x="96" y="144" width="7" height="7" fill="#483060"/><rect x="104" y="144" width="7" height="7" fill="#ffffff"/><rect x="112" y="144" width="7" height="7" fill="#ffffff"/><rect x="120" y="144" width="7" height="7" fill="#ffffff"/><rect x="128" y="144" width="7" height="7" fill="#ffffff"/><rect x="136" y="144" width="7" height="7" fill="#ffffff"/><rect x="144" y="144" width="7" height="7" fill="#ffffff"/><rect x="152" y="144" width="7" height="7" fill="#ffffff"/><rect x="0" y="152" width="7" height="7" fill="#ffffff"/><rect x="8" y="152" width="7" height="7" fill="#ffffff"/><rect x="16" y="152" width="7" height="7" fill="#ffffff"/><rect x="24" y="152" width="7" height="7" fill="#ffffff"/><rect x="32" y="152" width="7" height="7" fill="#683850"/><rect x="40" y="152" width="7" height="7" fill="#683850"/><rect x="48" y="152" width="7" height="7" fill="#683850"/><rect x="56" y="152" width="7" height="7" fill="#683850"/><rect x="64" y="152" width="7" height="7" fill="#402848"/><rect x="72" y="152" width="7" height="7" fill="#402848"/><rect x="80" y="152" width="7" height="7" fill="#402848"/><rect x="88" y="152" width="7" height="7" fill="#402848"/><rect x="96" y="152" width="7" height="7" fill="#ffffff"/><rect x="104" y="152" width="7" height="7" fill="#ffffff"/><rect x="112" y="152" width="7" height="7" fill="#ffffff"/><rect x="120" y="152" width="7" height="7" fill="#ffffff"/><rect x="128" y="152" width="7" height="7" fill="#ffffff"/><rect x="136" y="152" width="7" height="7" fill="#ffffff"/><rect x="144" y="152" width="7" height="7" fill="#ffffff"/><rect x="152" y="152" width="7" height="7" fill="#ffffff"/></svg>
<div style="left:1266px;top:186px;width:8px;height:160px;background:#4a4a4a;"></div>
<div style="left:1267px;top:197px;width:6px;height:128px;background:#5e5e5e;border-radius:2px;"></div>
<svg style="left:1267px;top:340px" width="6" height="4" viewBox="0 0 6 4"><path d="M0.700 0.700l2.300 2.300 2.300-2.300" fill="none" stroke="#a0a0a0" stroke-width="0.900"/></svg>
<svg style="left:1267px;top:189px" width="6" height="4" viewBox="0 0 6 4"><path d="M0.700 3.300l2.300-2.300 2.300 2.300" fill="none" stroke="#a0a0a0" stroke-width="0.900"/></svg>
<svg style="left:1229px;top:351px" width="9" height="9" viewBox="0 0 9 9"><path d="M2.500 0.500h6v6h-2v2h-6v-6h2z" fill="none" stroke="#d0d0d0" stroke-width="0.900"/><path d="M5 5h3v3h-3z" fill="#e8e8e8"/></svg>
<svg style="left:1249px;top:350px" width="8" height="10" viewBox="0 0 8 10"><path d="M1 2.500h6v7h-6zM0 2.500h8M3 0.800h2M3 4.500v3M5 4.500v3" fill="none" stroke="#8d8d8d" stroke-width="0.900"/></svg>
<div style="left:1104px;top:362px;width:171px;height:4px;background:#3e3e3e;"></div>
<div style="left:1104px;top:366px;width:171px;height:12px;background:#424242;"></div>
<div style="left:1104px;top:366px;width:34px;height:12px;background:#535353;"></div>
<span class="t" style="left:1108px;top:368.5px;font-size:7.5px;color:#f0f0f0;font-weight:bold;">Layers</span>
<div style="left:1265px;top:370px;width:6px;height:1px;background:#c0c0c0;"></div>
<div style="left:1265px;top:372px;width:6px;height:1px;background:#c0c0c0;"></div>
<div style="left:1265px;top:374px;width:6px;height:1px;background:#8c8c8c;"></div>
<div style="left:1104px;top:378px;width:171px;height:313px;background:#535353;"></div>
<div style="left:1107px;top:383px;width:67px;height:13px;background:#4a4a4a;border-radius:1px;"></div>
<svg style="left:1110px;top:385px" width="9" height="9" viewBox="0 0 9 9"><circle cx="5.500" cy="3.500" r="2.600" fill="none" stroke="#e0e0e0" stroke-width="1"/><path d="M3.600 5.400l-3 3" stroke="#e0e0e0" stroke-width="1.200"/></svg>
<span class="t" style="left:1121px;top:385.5px;font-size:7.5px;color:#e6e6e6;">Kind</span>
<svg style="left:1163px;top:388px" width="6" height="4" viewBox="0 0 6 4"><path d="M0.700 0.700l2.300 2.300 2.300-2.300" fill="none" stroke="#cfcfcf" stroke-width="0.900"/></svg>
<svg style="left:1178px;top:384px" width="10" height="9" viewBox="0 0 10 9"><rect x="0.500" y="0.500" width="9" height="8" fill="none" stroke="#e0e0e0"/><path d="M2 7l2-3 1.500 2 1-1 1.500 2z" fill="#e0e0e0"/></svg>
<svg style="left:1194px;top:384px" width="9" height="9" viewBox="0 0 9 9"><circle cx="4.500" cy="4.500" r="4" fill="none" stroke="#e0e0e0"/><path d="M4.500 0.500a4 4 0 0 1 0 8z" fill="#e0e0e0" transform="rotate(40 4.500 4.500)"/></svg>
<span class="t" style="left:1211px;top:383.5px;font-size:10px;color:#e6e6e6;font-family:'Liberation Serif',serif;font-weight:bold;">T</span>
<svg style="left:1226px;top:384px" width="10" height="9" viewBox="0 0 10 9"><rect x="2" y="1.500" width="6" height="6" fill="none" stroke="#e0e0e0"/><path d="M0.500 0.500h2v2h-2zM7.500 0.500h2v2h-2zM0.500 6.500h2v2h-2zM7.500 6.500h2v2h-2z" fill="#e0e0e0"/></svg>
<svg style="left:1243px;top:383px" width="8" height="10" viewBox="0 0 8 10"><path d="M0.500 0.500h4.500l2.500 2.500v6.500h-7z" fill="#e0e0e0"/><rect x="3" y="5" width="3" height="3" fill="#444"/></svg>
<div style="left:1260px;top:382px;width:5px;height:5px;background:#e8e8e8;border-radius:3px;"></div>
<div style="left:1262px;top:387px;width:1px;height:4px;background:#888;"></div>
<div style="left:1107px;top:401px;width:86px;height:13px;background:#4a4a4a;border-radius:1px;"></div>
<span class="t" style="left:1112px;top:403.5px;font-size:7.5px;color:#e6e6e6;">Normal</span>
<svg style="left:1185px;top:406px" width="6" height="4" viewBox="0 0 6 4"><path d="M0.700 0.700l2.300 2.300 2.300-2.300" fill="none" stroke="#cfcfcf" stroke-width="0.900"/></svg>
<span class="t" style="left:1198px;top:403.5px;font-size:7.5px;color:#cccccc;">Opacity:</span>
<span class="t" style="left:1231px;top:403.5px;font-size:7.5px;color:#e6e6e6;">100%</span>
<svg style="left:1259px;top:406px" width="6" height="4" viewBox="0 0 6 4"><path d="M0.700 0.700l2.300 2.300 2.300-2.300" fill="none" stroke="#cfcfcf" stroke-width="0.900"/></svg>
<span class="t" style="left:1108px;top:421.5px;font-size:7.5px;color:#a8a8a8;">Lock:</span>
<svg style="left:1131px;top:420px" width="9" height="9" viewBox="0 0 9 9"><rect x="0.500" y="0.500" width="8" height="8" fill="none" stroke="#e0e0e0"/><path d="M1 1h2.300v2.300h-2.300zM5.700 1h2.300v2.300h-2.300zM3.300 3.300h2.400v2.400h-2.400zM1 5.700h2.300v2.300h-2.300zM5.700 5.700h2.300v2.300h-2.300z" fill="#e0e0e0"/></svg>
<svg style="left:1146px;top:420px" width="9" height="9" viewBox="0 0 9 9"><path d="M8.500 0.500l-4.500 5 1 1z" fill="#e0e0e0"/><path d="M3.800 6c-1.500 0-1.500 1.500-3.300 2.500 2 0.400 4 0 4.200-1.500z" fill="#e0e0e0"/></svg>
<svg style="left:1160px;top:420px" width="9" height="9" viewBox="0 0 9 9"><path d="M4.500 0.500v8M0.500 4.500h8" stroke="#e0e0e0" stroke-width="1"/><path d="M4.500 0l1.500 1.800h-3zM4.500 9l1.500-1.800h-3zM0 4.500l1.800-1.500v3zM9 4.500l-1.800-1.500v3z" fill="#e0e0e0"/></svg>
<svg style="left:1174px;top:420px" width="10" height="9" viewBox="0 0 10 9"><path d="M2.500 0v6.500h7M0 2.500h6.500v6.500" fill="none" stroke="#e0e0e0" stroke-width="1"/><path d="M6 0.500l3 0 0 3" fill="none" stroke="#e0e0e0" stroke-width="0.800"/></svg>
<svg style="left:1190px;top:419px" width="8" height="10" viewBox="0 0 8 10"><rect x="0.500" y="4.500" width="7" height="5" fill="#e0e0e0"/><path d="M2 4.500v-1.500a2 2 0 0 1 4 0v1.500" fill="none" stroke="#e0e0e0" stroke-width="1.100"/></svg>
<span class="t" style="left:1214px;top:421.5px;font-size:7.5px;color:#cccccc;">Fill:</span>
<span class="t" style="left:1231px;top:421.5px;font-size:7.5px;color:#e6e6e6;">100%</span>
<svg style="left:1259px;top:424px" width="6" height="4" viewBox="0 0 6 4"><path d="M0.700 0.700l2.300 2.300 2.300-2.300" fill="none" stroke="#cfcfcf" stroke-width="0.900"/></svg>
<div style="left:1104px;top:435px;width:163px;height:241px;background:#535353;"></div>
<svg style="left:1138px;top:440px" width="4" height="6" viewBox="0 0 4 6"><path d="M0.700 0.700l2.300 2.300-2.300 2.300" fill="none" stroke="#d0d0d0" stroke-width="0.900"/></svg>
<svg style="left:1145px;top:439px" width="11" height="9" viewBox="0 0 11 9"><path d="M0.500 0.500h3.500l1 1.500h5.500v6.500h-10z" fill="#e2e2e2"/><path d="M0.500 2.500h10" stroke="#777" stroke-width="0.600"/></svg>
<span class="t" style="left:1161px;top:439px;font-size:7.5px;color:#e2e2e2;">music</span>
<svg style="left:1109px;top:455.0px" width="10" height="7" viewBox="0 0 10 7"><path d="M0.300 3.500c2.200-4 7.200-4 9.400 0-2.200 4-7.200 4-9.400 0z" fill="#e8e8e8"/><circle cx="5" cy="3.500" r="1.700" fill="#4a4a4a"/></svg>
<svg style="left:1137px;top:456.5px" width="6" height="4" viewBox="0 0 6 4"><path d="M0.700 0.700l2.300 2.300 2.300-2.300" fill="none" stroke="#d0d0d0" stroke-width="0.900"/></svg>
<svg style="left:1145px;top:454.5px" width="11" height="9" viewBox="0 0 11 9"><path d="M0.500 0.500h3.500l1 1.500h5.500v6.500h-10z" fill="#e2e2e2"/><path d="M0.500 3.500h10" stroke="#535353" stroke-width="0.800"/></svg>
<span class="t" style="left:1161px;top:454.5px;font-size:7.5px;color:#e2e2e2;">dressed</span>
<svg style="left:1109px;top:470.5px" width="10" height="7" viewBox="0 0 10 7"><path d="M0.300 3.500c2.200-4 7.200-4 9.400 0-2.200 4-7.200 4-9.400 0z" fill="#e8e8e8"/><circle cx="5" cy="3.500" r="1.700" fill="#4a4a4a"/></svg>
<svg style="left:1148px;top:472px" width="6" height="4" viewBox="0 0 6 4"><path d="M0.700 0.700l2.300 2.300 2.300-2.300" fill="none" stroke="#d0d0d0" stroke-width="0.900"/></svg>
<svg style="left:1155px;top:470px" width="11" height="9" viewBox="0 0 11 9"><path d="M0.500 0.500h3.500l1 1.500h5.500v6.500h-10z" fill="#e2e2e2"/><path d="M0.500 3.500h10" stroke="#535353" stroke-width="0.800"/></svg>
<span class="t" style="left:1173px;top:470px;font-size:7.5px;color:#e2e2e2;">eve_arms_dressed_a_f...</span>
<div style="left:1124px;top:481px;width:143px;height:21px;background:#696969;"></div>
<svg style="left:1109px;top:488.5px" width="10" height="7" viewBox="0 0 10 7"><path d="M0.300 3.500c2.200-4 7.200-4 9.400 0-2.200 4-7.200 4-9.400 0z" fill="#e8e8e8"/><circle cx="5" cy="3.500" r="1.700" fill="#4a4a4a"/></svg>
<svg style="left:1109px;top:509.5px" width="10" height="7" viewBox="0 0 10 7"><path d="M0.300 3.500c2.200-4 7.200-4 9.400 0-2.200 4-7.200 4-9.400 0z" fill="#e8e8e8"/><circle cx="5" cy="3.500" r="1.700" fill="#4a4a4a"/></svg>
<div style="left:1157px;top:482px;width:23px;height:19px;background:#e9e9e9;border:1px solid #ffffff;box-sizing:border-box;background-image:linear-gradient(45deg,#dcdcdc 25%,transparent 25%,transparent 75%,#dcdcdc 75%),linear-gradient(45deg,#dcdcdc 25%,transparent 25%,transparent 75%,#dcdcdc 75%);background-size:4px 4px;background-position:0 0,2px 2px;"></div>
<div style="left:1158px;top:503px;width:23px;height:19px;background:#e9e9e9;border:1px solid #3a3a3a;box-sizing:border-box;background-image:linear-gradient(45deg,#dcdcdc 25%,transparent 25%,transparent 75%,#dcdcdc 75%),linear-gradient(45deg,#dcdcdc 25%,transparent 25%,transparent 75%,#dcdcdc 75%);background-size:4px 4px;background-position:0 0,2px 2px;"></div>
<div style="left:1171px;top:514px;width:2px;height:3px;background:#333;"></div>
<span class="t" style="left:1186px;top:488px;font-size:7.5px;color:#f0f0f0;">Layer 80</span>
<span class="t" style="left:1186px;top:509px;font-size:7.5px;color:#e6e6e6;">Layer 71</span>
<svg style="left:1149px;top:529px" width="4" height="6" viewBox="0 0 4 6"><path d="M0.700 0.700l2.300 2.300-2.300 2.300" fill="none" stroke="#d0d0d0" stroke-width="0.900"/></svg>
<svg style="left:1155px;top:528px" width="11" height="9" viewBox="0 0 11 9"><path d="M0.500 0.500h3.500l1 1.500h5.500v6.500h-10z" fill="#e2e2e2"/><path d="M0.500 2.500h10" stroke="#777" stroke-width="0.600"/></svg>
<span class="t" style="left:1173.5px;top:528px;font-size:7.5px;color:#e2e2e2;">eve_arms_topless_a_fr...</span>
<svg style="left:1149px;top:544px" width="4" height="6" viewBox="0 0 4 6"><path d="M0.700 0.700l2.300 2.300-2.300 2.300" fill="none" stroke="#d0d0d0" stroke-width="0.900"/></svg>
<svg style="left:1155px;top:543px" width="11" height="9" viewBox="0 0 11 9"><path d="M0.500 0.500h3.500l1 1.500h5.500v6.500h-10z" fill="#e2e2e2"/><path d="M0.500 2.500h10" stroke="#777" stroke-width="0.600"/></svg>
<span class="t" style="left:1173.5px;top:543px;font-size:7.5px;color:#e2e2e2;">eve_arms_topless_a_r...</span>
<svg style="left:1149px;top:559px" width="4" height="6" viewBox="0 0 4 6"><path d="M0.700 0.700l2.300 2.300-2.300 2.300" fill="none" stroke="#d0d0d0" stroke-width="0.900"/></svg>
<svg style="left:1155px;top:558px" width="11" height="9" viewBox="0 0 11 9"><path d="M0.500 0.500h3.500l1 1.500h5.500v6.500h-10z" fill="#e2e2e2"/><path d="M0.500 2.500h10" stroke="#777" stroke-width="0.600"/></svg>
<span class="t" style="left:1173.5px;top:558px;font-size:7.5px;color:#e2e2e2;">eve_arms_dressed_ho...</span>
<svg style="left:1149px;top:574.5px" width="4" height="6" viewBox="0 0 4 6"><path d="M0.700 0.700l2.300 2.300-2.300 2.300" fill="none" stroke="#d0d0d0" stroke-width="0.900"/></svg>
<svg style="left:1155px;top:573.5px" width="11" height="9" viewBox="0 0 11 9"><path d="M0.500 0.500h3.500l1 1.500h5.500v6.500h-10z" fill="#e2e2e2"/><path d="M0.500 2.500h10" stroke="#777" stroke-width="0.600"/></svg>
<span class="t" style="left:1173.5px;top:573.5px;font-size:7.5px;color:#e2e2e2;">eve_arms_dressed_a_...</span>
<svg style="left:1149px;top:590px" width="4" height="6" viewBox="0 0 4 6"><path d="M0.700 0.700l2.300 2.300-2.300 2.300" fill="none" stroke="#d0d0d0" stroke-width="0.900"/></svg>
<svg style="left:1155px;top:589px" width="11" height="9" viewBox="0 0 11 9"><path d="M0.500 0.500h3.500l1 1.500h5.500v6.500h-10z" fill="#e2e2e2"/><path d="M0.500 2.500h10" stroke="#777" stroke-width="0.600"/></svg>
<span class="t" style="left:1173.5px;top:589px;font-size:7.5px;color:#e2e2e2;">eve_arms_dressed_a_...</span>
<svg style="left:1149px;top:605px" width="4" height="6" viewBox="0 0 4 6"><path d="M0.700 0.700l2.300 2.300-2.300 2.300" fill="none" stroke="#d0d0d0" stroke-width="0.900"/></svg>
<svg style="left:1155px;top:604px" width="11" height="9" viewBox="0 0 11 9"><path d="M0.500 0.500h3.500l1 1.500h5.500v6.500h-10z" fill="#e2e2e2"/><path d="M0.500 2.500h10" stroke="#777" stroke-width="0.600"/></svg>
<span class="t" style="left:1173.5px;top:604px;font-size:7.5px;color:#e2e2e2;">eve_arms_a_dressed_up</span>
<svg style="left:1149px;top:620px" width="4" height="6" viewBox="0 0 4 6"><path d="M0.700 0.700l2.300 2.300-2.300 2.300" fill="none" stroke="#d0d0d0" stroke-width="0.900"/></svg>
<svg style="left:1155px;top:619px" width="11" height="9" viewBox="0 0 11 9"><path d="M0.500 0.500h3.500l1 1.500h5.500v6.500h-10z" fill="#e2e2e2"/><path d="M0.500 2.500h10" stroke="#777" stroke-width="0.600"/></svg>
<span class="t" style="left:1173.5px;top:619px;font-size:7.5px;color:#e2e2e2;">eve_arms_a_dressed_r...</span>
<svg style="left:1149px;top:635px" width="4" height="6" viewBox="0 0 4 6"><path d="M0.700 0.700l2.300 2.300-2.300 2.300" fill="none" stroke="#d0d0d0" stroke-width="0.900"/></svg>
<svg style="left:1155px;top:634px" width="11" height="9" viewBox="0 0 11 9"><path d="M0.500 0.500h3.500l1 1.500h5.500v6.500h-10z" fill="#e2e2e2"/><path d="M0.500 2.500h10" stroke="#777" stroke-width="0.600"/></svg>
<span class="t" style="left:1173.5px;top:634px;font-size:7.5px;color:#e2e2e2;">eve_arms_a_dressed_...</span>
<svg style="left:1149px;top:651px" width="4" height="6" viewBox="0 0 4 6"><path d="M0.700 0.700l2.300 2.300-2.300 2.300" fill="none" stroke="#d0d0d0" stroke-width="0.900"/></svg>
<svg style="left:1155px;top:650px" width="11" height="9" viewBox="0 0 11 9"><path d="M0.500 0.500h3.500l1 1.500h5.500v6.500h-10z" fill="#e2e2e2"/><path d="M0.500 2.500h10" stroke="#777" stroke-width="0.600"/></svg>
<span class="t" style="left:1173.5px;top:650px;font-size:7.5px;color:#e2e2e2;">eve_arms_a_dressed_...</span>
<svg style="left:1149px;top:666px" width="4" height="6" viewBox="0 0 4 6"><path d="M0.700 0.700l2.300 2.300-2.300 2.300" fill="none" stroke="#d0d0d0" stroke-width="0.900"/></svg>
<svg style="left:1155px;top:665px" width="11" height="9" viewBox="0 0 11 9"><path d="M0.500 0.500h3.500l1 1.500h5.500v6.500h-10z" fill="#e2e2e2"/><path d="M0.500 2.500h10" stroke="#777" stroke-width="0.600"/></svg>
<span class="t" style="left:1173.5px;top:665px;font-size:7.5px;color:#e2e2e2;">eve_arms_a_dressed_...</span>
<div style="left:1122px;top:435px;width:1px;height:241px;background:#4b4b4b;"></div>
<div style="left:1104px;top:435px;width:163px;height:1px;background:#4d4d4d;"></div>
<div style="left:1104px;top:450.5px;width:163px;height:1px;background:#4d4d4d;"></div>
<div style="left:1104px;top:466px;width:163px;height:1px;background:#4d4d4d;"></div>
<div style="left:1104px;top:481px;width:163px;height:1px;background:#4d4d4d;"></div>
<div style="left:1104px;top:502.5px;width:163px;height:1px;background:#4d4d4d;"></div>
<div style="left:1104px;top:524px;width:163px;height:1px;background:#4d4d4d;"></div>
<div style="left:1104px;top:539.5px;width:163px;height:1px;background:#4d4d4d;"></div>
<div style="left:1104px;top:554.5px;width:163px;height:1px;background:#4d4d4d;"></div>
<div style="left:1104px;top:570px;width:163px;height:1px;background:#4d4d4d;"></div>
<div style="left:1104px;top:585.5px;width:163px;height:1px;background:#4d4d4d;"></div>
<div style="left:1104px;top:600.5px;width:163px;height:1px;background:#4d4d4d;"></div>
<div style="left:1104px;top:616px;width:163px;height:1px;background:#4d4d4d;"></div>
<div style="left:1104px;top:631px;width:163px;height:1px;background:#4d4d4d;"></div>
<div style="left:1104px;top:646.5px;width:163px;height:1px;background:#4d4d4d;"></div>
<div style="left:1104px;top:661.5px;width:163px;height:1px;background:#4d4d4d;"></div>
<div style="left:1267px;top:435px;width:8px;height:241px;background:#4a4a4a;"></div>
<div style="left:1268px;top:446px;width:6px;height:80px;background:#5e5e5e;border-radius:2px;"></div>
<svg style="left:1268px;top:438px" width="6" height="4" viewBox="0 0 6 4"><path d="M0.700 3.300l2.300-2.300 2.300 2.300" fill="none" stroke="#a0a0a0" stroke-width="0.900"/></svg>
<svg style="left:1268px;top:668px" width="6" height="4" viewBox="0 0 6 4"><path d="M0.700 0.700l2.300 2.300 2.300-2.300" fill="none" stroke="#a0a0a0" stroke-width="0.900"/></svg>
<div style="left:1104px;top:676px;width:171px;height:1px;background:#464646;"></div>
<svg style="left:1140px;top:679px" width="10" height="6" viewBox="0 0 10 6"><rect x="0.500" y="0.500" width="5" height="5" rx="2" fill="none" stroke="#8a8a8a"/><rect x="4.500" y="0.500" width="5" height="5" rx="2" fill="none" stroke="#8a8a8a"/></svg>
<span class="t" style="left:1159px;top:677px;font-size:9px;color:#e0e0e0;font-style:italic;font-family:'Liberation Serif',serif;">fx</span>
<svg style="left:1176px;top:678px" width="10" height="8" viewBox="0 0 10 8"><rect x="0" y="0" width="10" height="8" fill="#e2e2e2"/><circle cx="5" cy="4" r="2.300" fill="#4a4a4a"/></svg>
<svg style="left:1194px;top:677px" width="9" height="9" viewBox="0 0 9 9"><circle cx="4.500" cy="4.500" r="4" fill="none" stroke="#e0e0e0"/><path d="M4.500 0.500a4 4 0 0 1 0 8z" fill="#e0e0e0" transform="rotate(40 4.500 4.500)"/></svg>
<svg style="left:1212px;top:677px" width="11" height="9" viewBox="0 0 11 9"><path d="M0.500 0.500h3.500l1 1.500h5.500v6.500h-10z" fill="#e2e2e2"/></svg>
<svg style="left:1230px;top:677px" width="9" height="9" viewBox="0 0 9 9"><path d="M0.500 0.500h8v6l-2 2h-6z" fill="none" stroke="#e0e0e0"/><path d="M6.500 8.500v-2h2" fill="none" stroke="#e0e0e0"/></svg>
<svg style="left:1249px;top:676px" width="8" height="10" viewBox="0 0 8 10"><path d="M1 2.500h6v7h-6zM0 2.500h8M3 0.800h2M3 4.500v3M5 4.500v3" fill="none" stroke="#d8d8d8" stroke-width="0.900"/></svg>
<span class="t" style="left:35.5px;top:681.5px;font-size:7.5px;color:#e8e8e8;">50%</span>
<span class="t" style="left:86px;top:681.5px;font-size:7.5px;color:#d8d8d8;">Doc: 34.3M/1.54G</span>
<svg style="left:174px;top:682px" width="4" height="7" viewBox="0 0 4 7"><path d="M0.700 0.700l2.500 2.800-2.500 2.800" fill="none" stroke="#d0d0d0" stroke-width="0.900"/></svg>
<div style="left:0px;top:691px;width:1280px;height:29px;background:#0c0c0c;"></div>
<svg style="left:10px;top:699px" width="12" height="12" viewBox="0 0 12 12"><path d="M0 1.700l5-0.700v4.700h-5zM5.700 0.900l6.300-0.900v5.700h-6.300zM0 6.400h5v4.700l-5-0.700zM5.700 6.400h6.300v5.600l-6.300-0.900z" fill="#ffffff"/></svg>
<svg style="left:41px;top:699px" width="13" height="12" viewBox="0 0 13 12"><rect x="1" y="2.500" width="7" height="7" fill="none" stroke="#fff" stroke-width="1.200"/><path d="M10 1v10M12 1v10M0 4.500h1.500M0 7.500h1.500" stroke="#fff" stroke-width="1.100"/></svg>
<svg style="left:74px;top:697px" width="16" height="16" viewBox="0 0 16 16"><circle cx="8" cy="8" r="7.500" fill="#e8e8e8"/><path d="M8 8L1.500 4.200A7.500 7.500 0 0 1 14.500 4.200z" fill="#db4437"/><path d="M8 8L14.500 4.200A7.500 7.500 0 0 1 8 15.500z" fill="#f4c20d"/><path d="M8 8L8 15.500A7.500 7.500 0 0 1 1.500 4.200z" fill="#0f9d58"/><circle cx="8" cy="8" r="3.400" fill="#f1f1f1"/><circle cx="8" cy="8" r="2.600" fill="#4285f4"/></svg>
<svg style="left:106px;top:697px" width="16" height="17" viewBox="0 0 16 17"><path d="M2 0.500h12a1.500 1.500 0 0 1 1.500 1.500v14.500l-3.500-3h-10a1.500 1.500 0 0 1-1.500-1.500v-10a1.500 1.500 0 0 1 1.500-1.500z" fill="#7d8fd6"/><path d="M3.500 5c3-1.500 6-1.500 9 0 0.800 2 0.800 4 0.300 5.500-2.500 1.300-7 1.300-9.600 0-0.500-1.500-0.500-3.500 0.300-5.500z" fill="#fff"/><circle cx="6" cy="8" r="1.100" fill="#5d6fb8"/><circle cx="10" cy="8" r="1.100" fill="#5d6fb8"/></svg>
<svg style="left:139px;top:696px" width="16" height="18" viewBox="0 0 16 18"><path d="M8 0.500l6.500 10.500c1 2-1 3.500-2.500 4.500-2 1-6 1-8 0-1.500-1-3.500-2.500-2.500-4.500z" fill="#8fa3a0"/><path d="M8 2l2.500 5-2.500 2.500-2.500-2.500z" fill="#e6eeee"/><ellipse cx="8" cy="14" rx="4.500" ry="2.200" fill="#c8d6d4"/><path d="M3 11c2 1 3 3 2.500 5" stroke="#3c4a48" stroke-width="1" fill="none"/></svg>
<svg style="left:171px;top:697px" width="16" height="16" viewBox="0 0 16 16"><circle cx="8" cy="8" r="7.200" fill="#151515" stroke="#f2f2f2" stroke-width="1.300"/><path d="M8 8V2.500M8 8l4.500 3M8 8l-4.500 3" stroke="#f2f2f2" stroke-width="1.300" fill="none"/><path d="M8 2.500c2.500 0.500 3.500 2.500 3 4.500M12.500 11c-2 1.800-4 1.500-5.500 0.300M3.500 11c-1-2.500 0-4.500 1.800-5.300" stroke="#f2f2f2" stroke-width="1" fill="none"/></svg>
<svg style="left:204px;top:697px" width="16" height="16" viewBox="0 0 16 16"><circle cx="8" cy="8" r="7.500" fill="#1b66e0"/><circle cx="8" cy="6.800" r="3.300" fill="#fff"/><path d="M6.800 9h2.400l-0.600 4h-1.200z" fill="#fff"/><circle cx="8" cy="6.800" r="1.300" fill="#1b66e0"/></svg>
<svg style="left:236px;top:696px" width="17" height="17" viewBox="0 0 17 17"><rect width="17" height="17" fill="#b01414"/><rect x="1" y="1" width="15" height="15" fill="#c81c1c"/><path d="M10 2l-5 7.500h3.300l-1.800 5.500 5.500-8h-3.300z" fill="#fff"/></svg>
<svg style="left:269px;top:696px" width="17" height="18" viewBox="0 0 17 18"><rect x="2" y="2" width="13" height="14" rx="1.500" transform="rotate(-12 8.500 9)" fill="#d47a86"/><rect x="3.500" y="2.500" width="10" height="13" transform="rotate(8 8.500 9)" fill="#5a4a78"/><rect x="5" y="4.500" width="7" height="3.500" transform="rotate(8 8.500 9)" fill="#f2d8dc"/><rect x="5" y="10" width="7" height="3.500" transform="rotate(8 8.500 9)" fill="#f2d8dc"/></svg>
<svg style="left:302px;top:697px" width="16" height="16" viewBox="0 0 16 16"><circle cx="8" cy="8" r="7.500" fill="#16314f"/><path d="M0.500 8.500l5 2.200 3.500-3.200 5-1.500a7.500 7.500 0 0 1-13.500 5z" fill="#2a76b0"/><circle cx="11" cy="5.500" r="2.600" fill="none" stroke="#fff" stroke-width="1.300"/><path d="M0.800 7l5 2.200" stroke="#fff" stroke-width="2.400" stroke-linecap="round"/><circle cx="6" cy="10.500" r="1.900" fill="#fff"/></svg>
<svg style="left:334px;top:697px" width="16" height="16" viewBox="0 0 16 16"><circle cx="8" cy="8" r="7.500" fill="#f2f2f6"/><circle cx="8" cy="8" r="5.800" fill="#4a3a8a"/><rect x="5" y="7.500" width="6" height="4.500" fill="#fff"/><path d="M6 7.500v-1.500a2 2 0 0 1 4 0v1.500" fill="none" stroke="#fff" stroke-width="1.200"/><rect x="7.500" y="9" width="1" height="2" fill="#4a3a8a"/></svg>
<div style="left:359px;top:691px;width:33px;height:29px;background:#333638;"></div>
<div style="left:367px;top:696px;width:16px;height:16px;background:#0d1c26;border:1px solid #2ea3c8;box-sizing:border-box;"></div>
<span class="t" style="left:369.5px;top:699.5px;font-size:9px;color:#4cc2ea;font-weight:bold;letter-spacing:-0.300px;">Ps</span>
<svg style="left:399px;top:696px" width="17" height="17" viewBox="0 0 17 17"><path d="M5 1l9 1.500-2.500 13-9-1.500z" fill="#8fc8c4"/><path d="M6 2.500l7 1.200-1.800 9.500-7-1.200z" fill="#c8ebe6"/><path d="M2.500 14l9 1.500 3 0.500-9.500-0.500z" fill="#e8e8e8"/></svg>
<div style="left:68px;top:717px;width:28px;height:1.5px;background:#d6dde6;"></div>
<div style="left:101px;top:717px;width:27px;height:1.5px;background:#d6dde6;"></div>
<div style="left:166px;top:717px;width:27px;height:1.5px;background:#d6dde6;"></div>
<div style="left:394px;top:717px;width:28px;height:1.5px;background:#d6dde6;"></div>
<div style="left:359px;top:717px;width:33px;height:1.5px;background:#cfe4f4;"></div>
<svg style="left:1021.3px;top:700.1px" width="10.4" height="8.8" viewBox="0 0 13 11"><path d="M2 1.500c3-1.500 6-1.500 9 0 1.500 2.500 2 5 1.500 7.500-1 1-2.500 1.500-3.500 1.500l-0.700-1.300h-3.600l-0.700 1.300c-1 0-2.500-0.500-3.500-1.500-0.500-2.500 0-5 1.500-7.500z" fill="#f0f0f0"/><circle cx="4.500" cy="5.800" r="1.200" fill="#0c0c0c"/><circle cx="8.500" cy="5.800" r="1.200" fill="#0c0c0c"/></svg>
<svg style="left:1038.3px;top:699.3px" width="10.4" height="10.4" viewBox="0 0 13 13"><path d="M5.500 0.500l5 1.500c0 4-1 7.500-5 10-4-2.500-5-6-5-10z" fill="#f0f0f0"/><path d="M5.500 0.500v11.500M0.800 5.500h9.400" stroke="#0c0c0c" stroke-width="1"/><circle cx="9.500" cy="9.500" r="3.300" fill="#d81e1e"/><path d="M8 8l3 3M11 8l-3 3" stroke="#fff" stroke-width="1"/></svg>
<svg style="left:1053.3px;top:699.3px" width="10.4" height="10.4" viewBox="0 0 13 13"><circle cx="6.500" cy="6.500" r="5.800" fill="#0c0c0c" stroke="#f0f0f0" stroke-width="1.200"/><path d="M6.500 6.500V2M6.500 6.500l3.800 2.500M6.500 6.500l-3.800 2.500" stroke="#f0f0f0" stroke-width="1.100"/><rect x="0.500" y="8" width="4.500" height="4.500" fill="#d81e1e"/></svg>
<svg style="left:1069.3px;top:699.3px" width="10.4" height="10.4" viewBox="0 0 13 13"><rect width="13" height="13" fill="#3c4a2a"/><path d="M2 6.500c2-3.500 6-4 9.500-1.500-2 3.500-6 4.500-9.500 1.500z" fill="none" stroke="#8ab82a" stroke-width="1.300"/><circle cx="6.500" cy="6.300" r="1.500" fill="#8ab82a"/></svg>
<svg style="left:1085.4px;top:699.4px" width="11.2" height="11.2" viewBox="0 0 14 14"><path d="M2.500 1h4.500v7h-4.500zM4 8v3M7 3.500c3 0 5.500 3 5.500 7.500h-8" fill="none" stroke="#f0f0f0" stroke-width="1.100"/><circle cx="4" cy="11.500" r="1.800" fill="none" stroke="#f0f0f0" stroke-width="1"/></svg>
<svg style="left:1102.2px;top:698.5px" width="9.6" height="12.0" viewBox="0 0 12 15"><path d="M2.500 0.500h4.500v4h-4.500zM1 4.500h7.500v9.500h-7.500zM8.500 10.500l3-1v3l-3 1.500" fill="none" stroke="#f0f0f0" stroke-width="1.100"/></svg>
<svg style="left:1117.3px;top:700.2px" width="10.4" height="9.6" viewBox="0 0 13 12"><path d="M3.500 2.500h9v6.500h-9zM0.500 0.500h4.500v3.500h-4.500zM6 9v2.500M3.500 11.500h6" fill="none" stroke="#f0f0f0" stroke-width="1.100"/><rect x="0.500" y="6" width="4" height="5" fill="#f0f0f0"/></svg>
<svg style="left:1132.4px;top:699.3px" width="11.2" height="10.4" viewBox="0 0 14 13"><path d="M0.800 4.500h2.500l3.200-3v10l-3.200-3h-2.500z" fill="none" stroke="#f0f0f0" stroke-width="1.100"/><path d="M8.500 4.500c0.800 1.200 0.800 2.800 0 4M10.500 3c1.500 2.200 1.500 4.800 0 7" fill="none" stroke="#f0f0f0" stroke-width="0.900"/><path d="M12.300 1.800c2 3 2 6.400 0 9.400" fill="none" stroke="#8a8a8a" stroke-width="0.800"/></svg>
<svg style="left:1151.4px;top:699.3px" width="11.2" height="10.4" viewBox="0 0 14 13"><path d="M1 10.500c1-3 3-3 4-1s3 1 4-1.500l3.500-6M8.500 5.500l3 2" fill="none" stroke="#f0f0f0" stroke-width="1.200"/><circle cx="2.800" cy="10.500" r="2" fill="none" stroke="#f0f0f0" stroke-width="1.100"/></svg>
<span class="t" style="left:1172px;top:700.5px;font-size:8px;color:#f4f4f4;">ENG</span>
<span class="t" style="left:1202.5px;top:695px;font-size:8px;color:#f4f4f4;">3:04 PM</span>
<span class="t" style="left:1195.5px;top:707px;font-size:8px;color:#f4f4f4;">2019-07-03</span>
<svg style="left:1249px;top:699px" width="12" height="12" viewBox="0 0 12 12"><path d="M0.600 0.600h10.800v8h-4.400l-1.500 2-1.500-2h-3.400z" fill="none" stroke="#f0f0f0" stroke-width="1.200"/></svg>
<div style="left:1274px;top:691px;width:1px;height:29px;background:#5a5a5a;"></div>
</div></body></html>
